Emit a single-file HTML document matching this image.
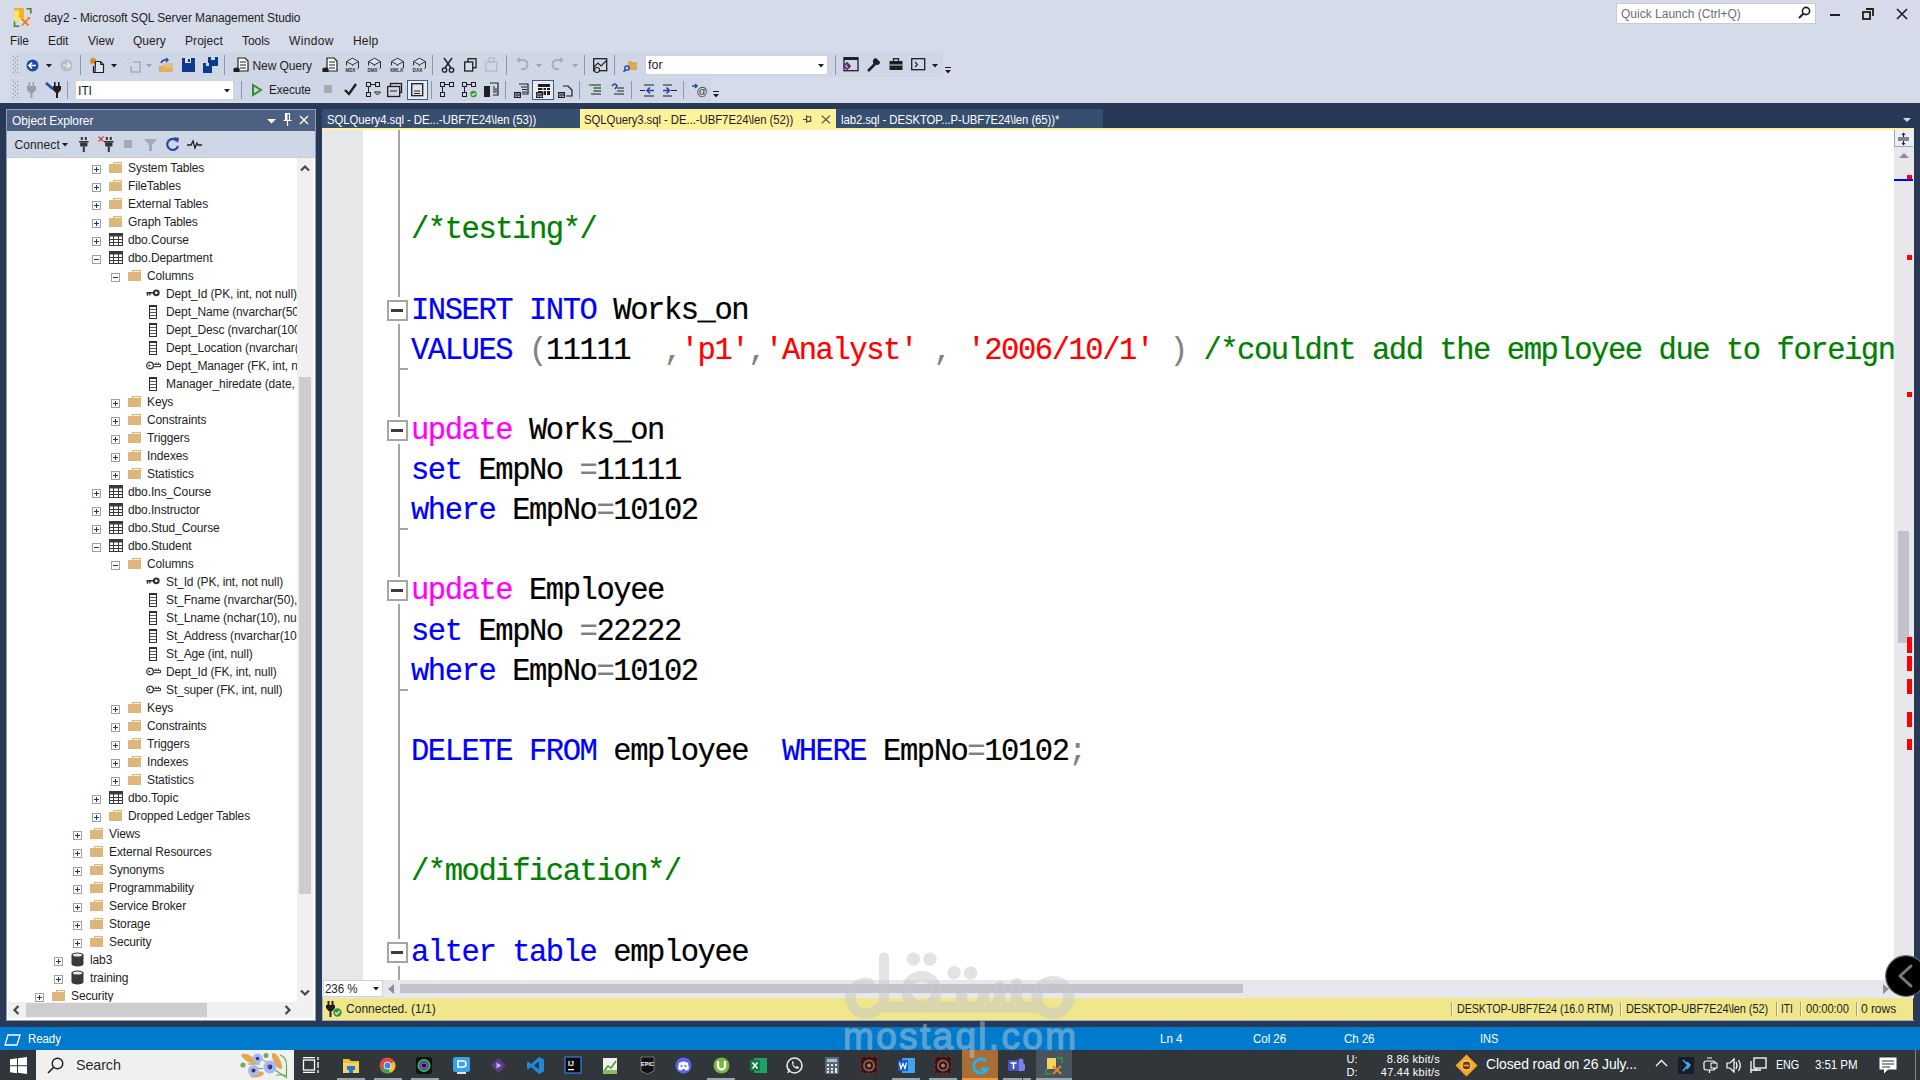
<!DOCTYPE html><html><head><meta charset="utf-8"><style>
*{margin:0;padding:0;box-sizing:border-box}
html,body{width:1920px;height:1080px;overflow:hidden;background:#d6dbe9;font-family:"Liberation Sans",sans-serif;font-size:12px;color:#1e1e1e}
.a{position:absolute}
.t{position:absolute;white-space:nowrap;line-height:14px}
svg{position:absolute;overflow:visible}
.ui{font-size:12px;letter-spacing:-0.2px}
.code{position:absolute;left:411px;height:40px;font-family:"Liberation Mono",monospace;font-size:30.5px;letter-spacing:-1.445px;white-space:pre;line-height:40px;color:#000;-webkit-text-stroke:0.2px currentColor}
.kw{color:#0000ff}.cm{color:#008000}.st{color:#ff0000}.gr{color:#808080}.mg{color:#ff00ff}
.row{position:absolute;height:18px;line-height:18px;white-space:nowrap;font-size:12px;letter-spacing:-0.12px;color:#1e1e1e}
.sep{position:absolute;width:1px;background:#99a3be}
</style></head><body>
<svg style="left:13px;top:7px;" width="20" height="20" viewBox="0 0 20 20"><rect x="1" y="1" width="10" height="12.5" fill="#f8e466"/><rect x="6" y="3" width="5" height="8" fill="#f3b41c"/><rect x="1" y="1" width="10" height="2.5" fill="#eab040"/><path d="M13.5 1.7h4.3v4.8M1.5 14.5v4.8h4.8" fill="none" stroke="#3c8c1c" stroke-width="1.6"/><path d="M8.5 11.5l7 7M16.5 10.5l-7.5 8" stroke="#f47a10" stroke-width="1.8"/><path d="M14.5 10l3 0.5-1 2z" fill="#f47a10"/></svg>
<div class="t" style="left:44px;top:11px;font-size:12.5px;color:#1e1e1e;letter-spacing:-0.083px;transform:scaleX(0.9536);transform-origin:0 0">day2 - Microsoft SQL Server Management Studio</div>
<div class="a" style="left:1616px;top:3px;width:200px;height:21px;background:#fff;border:1px solid #c4cbdc"></div>
<div class="t" style="left:1621px;top:7px;color:#6d6d6d;letter-spacing:0.004px">Quick Launch (Ctrl+Q)</div>
<svg style="left:1797px;top:6px;" width="14" height="14" viewBox="0 0 14 14"><circle cx="9" cy="5" r="3.6" fill="none" stroke="#1e1e1e" stroke-width="1.6"/><path d="M6.5 7.5L2 12" stroke="#1e1e1e" stroke-width="2"/></svg>
<div class="a" style="left:1830px;top:14px;width:10px;height:2px;background:#1e1e1e;"></div>
<svg style="left:1862px;top:8px;" width="13" height="13" viewBox="0 0 13 13"><rect x="1" y="4" width="7" height="7" fill="none" stroke="#1e1e1e" stroke-width="1.8"/><path d="M4 1h7v7" fill="none" stroke="#1e1e1e" stroke-width="1.8"/></svg>
<svg style="left:1896px;top:8px;" width="13" height="13" viewBox="0 0 13 13"><path d="M1 1l10 10M11 1L1 11" stroke="#1e1e1e" stroke-width="1.6"/></svg>
<div class="t" style="left:10px;top:34px;;letter-spacing:-0.080px;transform:scaleX(0.9886);transform-origin:0 0">File</div>
<div class="t" style="left:48px;top:34px;;letter-spacing:-0.080px;transform:scaleX(0.9972);transform-origin:0 0">Edit</div>
<div class="t" style="left:88px;top:34px;;letter-spacing:0.002px">View</div>
<div class="t" style="left:133px;top:34px;;letter-spacing:0.024px">Query</div>
<div class="t" style="left:185px;top:34px;;letter-spacing:0.065px">Project</div>
<div class="t" style="left:242px;top:34px;;letter-spacing:-0.080px;transform:scaleX(1.0067);transform-origin:0 0">Tools</div>
<div class="t" style="left:289px;top:34px;;letter-spacing:0.353px">Window</div>
<div class="t" style="left:353px;top:34px;;letter-spacing:0.155px">Help</div>
<div class="a" style="left:10px;top:52px;width:933px;height:25px;background:#cfd6e5;"></div>
<div class="a" style="left:943px;top:52px;width:10px;height:25px;background:#d6dbe9;"></div>
<div class="a" style="left:10px;top:78px;width:701px;height:23px;background:#cfd6e5;"></div>
<svg style="left:13px;top:56px;shape-rendering:crispEdges" width="5" height="17" viewBox="0 0 5 17"><rect x="0" y="0" width="1" height="1" fill="#7a85a0"/><rect x="4" y="0" width="1" height="1" fill="#7a85a0"/><rect x="2" y="2" width="1" height="1" fill="#7a85a0"/><rect x="0" y="4" width="1" height="1" fill="#7a85a0"/><rect x="4" y="4" width="1" height="1" fill="#7a85a0"/><rect x="2" y="6" width="1" height="1" fill="#7a85a0"/><rect x="0" y="8" width="1" height="1" fill="#7a85a0"/><rect x="4" y="8" width="1" height="1" fill="#7a85a0"/><rect x="2" y="10" width="1" height="1" fill="#7a85a0"/><rect x="0" y="12" width="1" height="1" fill="#7a85a0"/><rect x="4" y="12" width="1" height="1" fill="#7a85a0"/><rect x="2" y="14" width="1" height="1" fill="#7a85a0"/><rect x="0" y="16" width="1" height="1" fill="#7a85a0"/><rect x="4" y="16" width="1" height="1" fill="#7a85a0"/></svg>
<svg style="left:13px;top:81px;shape-rendering:crispEdges" width="5" height="17" viewBox="0 0 5 17"><rect x="0" y="0" width="1" height="1" fill="#7a85a0"/><rect x="4" y="0" width="1" height="1" fill="#7a85a0"/><rect x="2" y="2" width="1" height="1" fill="#7a85a0"/><rect x="0" y="4" width="1" height="1" fill="#7a85a0"/><rect x="4" y="4" width="1" height="1" fill="#7a85a0"/><rect x="2" y="6" width="1" height="1" fill="#7a85a0"/><rect x="0" y="8" width="1" height="1" fill="#7a85a0"/><rect x="4" y="8" width="1" height="1" fill="#7a85a0"/><rect x="2" y="10" width="1" height="1" fill="#7a85a0"/><rect x="0" y="12" width="1" height="1" fill="#7a85a0"/><rect x="4" y="12" width="1" height="1" fill="#7a85a0"/><rect x="2" y="14" width="1" height="1" fill="#7a85a0"/><rect x="0" y="16" width="1" height="1" fill="#7a85a0"/><rect x="4" y="16" width="1" height="1" fill="#7a85a0"/></svg>
<svg style="left:26px;top:59px;" width="13" height="13" viewBox="0 0 13 13"><circle cx="6.5" cy="6.5" r="6" fill="#1c4aa5"/><path d="M3 6.5h7M6 3.5L3 6.5l3 3" fill="none" stroke="#fff" stroke-width="1.7"/></svg>
<svg style="left:46px;top:64px;" width="6" height="4" viewBox="0 0 6 4"><path d="M0 0h6l-3.0 3.5z" fill="#1e1e1e"/></svg>
<svg style="left:60px;top:59px;" width="13" height="13" viewBox="0 0 13 13"><circle cx="6.5" cy="6.5" r="6" fill="#b9bdc6"/><path d="M3 6.5h7M7 3.5l3 3-3 3" fill="none" stroke="#e8e8e8" stroke-width="1.7"/></svg>
<div class="a" style="left:80px;top:55px;width:1px;height:20px;background:#8d97b3;"></div>
<svg style="left:89px;top:57px;" width="16" height="16" viewBox="0 0 16 16"><path d="M4 0.5v7M0.5 4h7M1.5 1.5l5 5M6.5 1.5l-5 5" stroke="#e07f12" stroke-width="1.1"/><circle cx="4" cy="4" r="1.6" fill="#e07f12"/><path d="M6.5 4.5h5l3 3v8h-8.5z" fill="#dde2ee" stroke="#1e1e1e" stroke-width="1.2"/><path d="M11.5 4.5v3h3" fill="none" stroke="#1e1e1e" stroke-width="1"/><path d="M4.5 9v6.5h2" fill="none" stroke="#1e1e1e" stroke-width="1.2"/></svg>
<svg style="left:111px;top:64px;" width="6" height="4" viewBox="0 0 6 4"><path d="M0 0h6l-3.0 3.5z" fill="#1e1e1e"/></svg>
<svg style="left:125px;top:57px;" width="16" height="16" viewBox="0 0 16 16"><path d="M8 5h7v10H6V9" fill="none" stroke="#a8adb8" stroke-width="1.6"/><circle cx="4" cy="4" r="2" fill="none" stroke="#c8ccd4"/></svg>
<svg style="left:146px;top:64px;" width="6" height="4" viewBox="0 0 6 4"><path d="M0 0h6l-3.0 3.5z" fill="#a0a4ae"/></svg>
<svg style="left:158px;top:58px;" width="16" height="15" viewBox="0 0 16 15"><path d="M1 8h5l2 2h7v4H1z" fill="#dca957"/><path d="M3 9l4-4h8v9H3z" fill="#e8b565" opacity="0.7"/><path d="M3 5q2-4 6-3" fill="none" stroke="#1c4aa5" stroke-width="1.6"/><path d="M8 0l2 2-2 2" fill="none" stroke="#1c4aa5" stroke-width="1.4"/></svg>
<svg style="left:182px;top:58px;" width="13" height="14" viewBox="0 0 13 14"><path d="M0 0h13v14H0z" fill="#0e3a8e"/><rect x="3" y="0" width="6" height="5" fill="#d6dbe9"/><rect x="6" y="1" width="2" height="3" fill="#0e3a8e"/><rect x="2" y="9" width="9" height="4" fill="#0e3a8e"/></svg>
<svg style="left:203px;top:57px;" width="15" height="16" viewBox="0 0 15 16"><path d="M5 0h10v9H5z" fill="#0e3a8e"/><rect x="8" y="0" width="4" height="3" fill="#cfd6e5"/><path d="M0 6h9v10H0z" fill="#0e3a8e"/><rect x="3" y="6" width="3" height="3" fill="#cfd6e5"/></svg>
<div class="a" style="left:224px;top:55px;width:1px;height:20px;background:#8d97b3;"></div>
<svg style="left:233px;top:57px;" width="16" height="16" viewBox="0 0 16 16"><path d="M5 1h7l3 3v10H5z" fill="#fff" stroke="#1e1e1e" stroke-width="1.2"/><path d="M7 5h6M7 8h6M7 11h6" stroke="#1e1e1e" stroke-width="1"/><ellipse cx="3.5" cy="12" rx="3" ry="1.5" fill="#1e1e1e"/><rect x="0.5" y="12" width="6" height="3" fill="#1e1e1e"/></svg>
<div class="t" style="left:252.5px;top:59px;;letter-spacing:-0.080px;transform:scaleX(1.0000);transform-origin:0 0">New Query</div>
<svg style="left:322px;top:57px;" width="16" height="16" viewBox="0 0 16 16"><path d="M5 1h7l3 3v10H5z" fill="#fff" stroke="#1e1e1e" stroke-width="1.2"/><path d="M7 5h6M7 8h6M7 11h6" stroke="#1e1e1e" stroke-width="1"/><ellipse cx="3.5" cy="12" rx="3" ry="1.5" fill="#1e1e1e"/><rect x="0.5" y="12" width="6" height="3" fill="#1e1e1e"/></svg>
<svg style="left:344px;top:57px;" width="16" height="16" viewBox="0 0 16 16"><path d="M2.5 4.5L8.5 1.2l6 3.3-6 3.3z" fill="#dde1ec" stroke="#303030" stroke-width="1"/><path d="M2.5 4.5v4M14.5 4.5v6.5l-1.2 0.8M8.5 7.8v1.2" fill="none" stroke="#303030" stroke-width="1"/><text x="6.5" y="15.3" font-size="6.2" font-family="Liberation Sans" font-weight="bold" text-anchor="middle" textLength="10" lengthAdjust="spacingAndGlyphs" fill="#303030">MDX</text></svg>
<svg style="left:366px;top:57px;" width="16" height="16" viewBox="0 0 16 16"><path d="M2.5 4.5L8.5 1.2l6 3.3-6 3.3z" fill="#dde1ec" stroke="#303030" stroke-width="1"/><path d="M2.5 4.5v4M14.5 4.5v6.5l-1.2 0.8M8.5 7.8v1.2" fill="none" stroke="#303030" stroke-width="1"/><text x="6.5" y="15.3" font-size="6.2" font-family="Liberation Sans" font-weight="bold" text-anchor="middle" textLength="10" lengthAdjust="spacingAndGlyphs" fill="#303030">DMX</text></svg>
<svg style="left:389px;top:57px;" width="16" height="16" viewBox="0 0 16 16"><path d="M2.5 4.5L8.5 1.2l6 3.3-6 3.3z" fill="#dde1ec" stroke="#303030" stroke-width="1"/><path d="M2.5 4.5v4M14.5 4.5v6.5l-1.2 0.8M8.5 7.8v1.2" fill="none" stroke="#303030" stroke-width="1"/><text x="7.5" y="15.3" font-size="6.2" font-family="Liberation Sans" font-weight="bold" text-anchor="middle" textLength="13" lengthAdjust="spacingAndGlyphs" fill="#303030">XMLA</text></svg>
<svg style="left:411px;top:57px;" width="16" height="16" viewBox="0 0 16 16"><path d="M2.5 4.5L8.5 1.2l6 3.3-6 3.3z" fill="#dde1ec" stroke="#303030" stroke-width="1"/><path d="M2.5 4.5v4M14.5 4.5v6.5l-1.2 0.8M8.5 7.8v1.2" fill="none" stroke="#303030" stroke-width="1"/><text x="6.5" y="15.3" font-size="6.2" font-family="Liberation Sans" font-weight="bold" text-anchor="middle" textLength="10" lengthAdjust="spacingAndGlyphs" fill="#303030">DAX</text></svg>
<div class="a" style="left:432px;top:55px;width:1px;height:20px;background:#8d97b3;"></div>
<svg style="left:441px;top:57px;" width="14" height="16" viewBox="0 0 14 16"><path d="M3 1l7 10M11 1L4 11" stroke="#1e1e1e" stroke-width="1.4"/><circle cx="3.5" cy="13" r="2.2" fill="none" stroke="#1e1e1e" stroke-width="1.3"/><circle cx="10.5" cy="13" r="2.2" fill="none" stroke="#1e1e1e" stroke-width="1.3"/></svg>
<svg style="left:464px;top:58px;" width="13" height="14" viewBox="0 0 13 14"><rect x="4" y="0.7" width="8" height="9" fill="none" stroke="#1e1e1e" stroke-width="1.3"/><rect x="0.7" y="4" width="8" height="9" fill="#d6dbe9" stroke="#1e1e1e" stroke-width="1.3"/></svg>
<svg style="left:485px;top:57px;" width="13" height="15" viewBox="0 0 13 15"><rect x="0.7" y="5" width="11" height="9" fill="none" stroke="#b4b9c4" stroke-width="1.3"/><rect x="4" y="1" width="5" height="4" fill="none" stroke="#b4b9c4" stroke-width="1.3"/></svg>
<div class="a" style="left:506px;top:55px;width:1px;height:20px;background:#8d97b3;"></div>
<svg style="left:515px;top:57px;" width="14" height="16" viewBox="0 0 14 16"><path d="M4 3h4a4.5 4.5 0 0 1 0 9H6" fill="none" stroke="#a8acb6" stroke-width="2"/><path d="M1 3l4-3v6z" fill="#a8acb6"/></svg>
<svg style="left:536px;top:64px;" width="6" height="4" viewBox="0 0 6 4"><path d="M0 0h6l-3.0 3.5z" fill="#a0a4ae"/></svg>
<svg style="left:551px;top:57px;" width="14" height="16" viewBox="0 0 14 16"><path d="M10 3H6a4.5 4.5 0 0 0 0 9h2" fill="none" stroke="#a8acb6" stroke-width="2"/><path d="M13 3l-4-3v6z" fill="#a8acb6"/></svg>
<svg style="left:572px;top:64px;" width="6" height="4" viewBox="0 0 6 4"><path d="M0 0h6l-3.0 3.5z" fill="#a0a4ae"/></svg>
<div class="a" style="left:584px;top:55px;width:1px;height:20px;background:#8d97b3;"></div>
<svg style="left:593px;top:58px;" width="15" height="15" viewBox="0 0 15 15"><rect x="0.7" y="0.7" width="13" height="12" fill="none" stroke="#1e1e1e" stroke-width="1.3"/><path d="M1 9l4-4 3 3 6-6" fill="none" stroke="#1e1e1e" stroke-width="1.1"/><circle cx="4" cy="12" r="2.5" fill="#cfd6e5" stroke="#1e1e1e" stroke-width="1.1"/></svg>
<div class="a" style="left:614px;top:55px;width:1px;height:20px;background:#8d97b3;"></div>
<svg style="left:623px;top:58px;" width="15" height="15" viewBox="0 0 15 15"><path d="M5 3h3l1 1h5v8H5z" fill="#dca957"/><circle cx="4" cy="10" r="2.2" fill="none" stroke="#1c4aa5" stroke-width="1.3"/><path d="M2.5 11.5L0.5 14" stroke="#1c4aa5" stroke-width="1.5"/></svg>
<div class="a" style="left:645px;top:55px;width:183px;height:20px;background:#fff;border:1px solid #cdd3e2"></div>
<div class="t" style="left:648px;top:58px;font-size:12.5px">for</div>
<svg style="left:818px;top:64px;" width="6" height="4" viewBox="0 0 6 4"><path d="M0 0h6l-3.0 3.5z" fill="#1e1e1e"/></svg>
<div class="a" style="left:835px;top:55px;width:1px;height:20px;background:#8d97b3;"></div>
<svg style="left:843px;top:57px;" width="16" height="16" viewBox="0 0 16 16"><rect x="1" y="0.7" width="14" height="13" fill="none" stroke="#1e1e1e" stroke-width="1.3"/><rect x="1" y="0.7" width="14" height="2.3" fill="#1e1e1e"/><path d="M1 9l3 3 3-3-3-3zM4 8l3 3" fill="none" stroke="#68217a" stroke-width="1.6"/></svg>
<svg style="left:866px;top:57px;" width="15" height="16" viewBox="0 0 15 16"><path d="M2 14l7-7" stroke="#1e1e1e" stroke-width="2.6"/><circle cx="10.5" cy="4.5" r="3.6" fill="#1e1e1e"/><path d="M10 1l3-1 2 2-1 3z" fill="#cfd6e5"/></svg>
<svg style="left:889px;top:58px;" width="14" height="13" viewBox="0 0 14 13"><rect x="0.5" y="3" width="13" height="9" fill="#1e1e1e"/><rect x="4.5" y="0.7" width="5" height="3" fill="none" stroke="#1e1e1e" stroke-width="1.3"/><rect x="0.5" y="6.5" width="13" height="1" fill="#cfd6e5"/></svg>
<svg style="left:911px;top:58px;" width="15" height="13" viewBox="0 0 15 13"><rect x="0.7" y="0.7" width="13" height="11" fill="none" stroke="#1e1e1e" stroke-width="1.3"/><path d="M4 4l2.5 2.5L4 9" fill="none" stroke="#1e1e1e" stroke-width="1.1"/></svg>
<svg style="left:932px;top:64px;" width="6" height="4" viewBox="0 0 6 4"><path d="M0 0h6l-3.0 3.5z" fill="#1e1e1e"/></svg>
<svg style="left:945px;top:67px;" width="7" height="8" viewBox="0 0 7 8"><rect x="0" y="0" width="6" height="1" fill="#1e1e1e"/><path d="M0 3h6l-3 3.5z" fill="#1e1e1e"/></svg>
<svg style="left:27px;top:82px;" width="9" height="16" viewBox="0 0 9 16"><rect x="1.5" y="0" width="1.6" height="4" fill="#9a9ea8"/><rect x="5.5" y="0" width="1.6" height="4" fill="#9a9ea8"/><path d="M0 4h9v4l-3 3H3L0 8z" fill="#9a9ea8"/><rect x="3.5" y="10" width="2" height="6" fill="#9a9ea8"/></svg>
<svg style="left:45px;top:82px;" width="16" height="16" viewBox="0 0 16 16"><rect x="9" y="0" width="1.6" height="4" fill="#1e1e1e"/><rect x="13" y="0" width="1.6" height="4" fill="#1e1e1e"/><path d="M8 4h8v4l-3 3h-2l-3-3z" fill="#1e1e1e"/><rect x="11" y="10" width="2" height="6" fill="#1e1e1e"/><path d="M1 1l7 6" stroke="#1c4aa5" stroke-width="2.5"/></svg>
<div class="a" style="left:67px;top:81px;width:1px;height:18px;background:#8d97b3;"></div>
<div class="a" style="left:75px;top:80px;width:159px;height:20px;background:#fff;border:1px solid #cdd3e2"></div>
<div class="t" style="left:78px;top:84px;font-size:12.5px;letter-spacing:-0.3px">ITI</div>
<svg style="left:224px;top:89px;" width="6" height="4" viewBox="0 0 6 4"><path d="M0 0h6l-3.0 3.5z" fill="#1e1e1e"/></svg>
<div class="a" style="left:241px;top:81px;width:1px;height:18px;background:#8d97b3;"></div>
<svg style="left:252px;top:84px;" width="10" height="12" viewBox="0 0 10 12"><path d="M1 1l8 5-8 5z" fill="none" stroke="#388a34" stroke-width="2"/></svg>
<div class="t" style="left:269px;top:83px;;letter-spacing:-0.080px;transform:scaleX(0.9766);transform-origin:0 0">Execute</div>
<div class="a" style="left:324px;top:85px;width:8px;height:8px;background:#a5a9b3;"></div>
<svg style="left:344px;top:83px;" width="13" height="13" viewBox="0 0 13 13"><path d="M1 7l4 4 7-10" fill="none" stroke="#1e1e1e" stroke-width="2.4"/></svg>
<svg style="left:366px;top:82px;" width="15" height="15" viewBox="0 0 15 15"><rect x="0.5" y="0.5" width="4" height="4" fill="none" stroke="#1e1e1e"/><rect x="9.5" y="0.5" width="4" height="4" fill="none" stroke="#1e1e1e"/><rect x="0.5" y="10.5" width="4" height="4" fill="none" stroke="#1e1e1e"/><path d="M5 2.5h4M2.5 5v5" stroke="#1e1e1e"/><path d="M8.5 10h6l-3 3z" fill="none" stroke="#1e1e1e"/></svg>
<svg style="left:387px;top:82px;" width="16" height="16" viewBox="0 0 16 16"><rect x="3.5" y="1.5" width="11" height="9" fill="none" stroke="#1e1e1e" stroke-width="1.3"/><rect x="0.7" y="4.5" width="12" height="10" fill="#cfd6e5" stroke="#1e1e1e" stroke-width="1.3"/><path d="M3 9h7" stroke="#1e1e1e"/></svg>
<div class="a" style="left:407px;top:80px;width:21px;height:20px;background:#e9ecf5;border:1px solid #3d5a8f"></div>
<svg style="left:411px;top:83px;" width="13" height="14" viewBox="0 0 13 14"><rect x="0.7" y="0.7" width="11" height="12" fill="#e0e3ea" stroke="#1e1e1e" stroke-width="1.3"/><path d="M3 8h6M3 10.5h6" stroke="#1e1e1e"/></svg>
<div class="a" style="left:431px;top:81px;width:1px;height:18px;background:#8d97b3;"></div>
<svg style="left:440px;top:82px;" width="15" height="15" viewBox="0 0 15 15"><rect x="0.5" y="0.5" width="4" height="4" fill="none" stroke="#1e1e1e"/><rect x="9.5" y="0.5" width="4" height="4" fill="none" stroke="#1e1e1e"/><rect x="0.5" y="10.5" width="4" height="4" fill="none" stroke="#1e1e1e"/><path d="M5 2.5h4M2.5 5v5" stroke="#1e1e1e"/></svg>
<svg style="left:462px;top:82px;" width="15" height="15" viewBox="0 0 15 15"><rect x="0.5" y="0.5" width="4" height="4" fill="none" stroke="#1e1e1e"/><rect x="9.5" y="0.5" width="4" height="4" fill="none" stroke="#1e1e1e"/><rect x="0.5" y="10.5" width="4" height="4" fill="none" stroke="#1e1e1e"/><path d="M5 2.5h4M2.5 5v5" stroke="#1e1e1e"/><circle cx="11.5" cy="12" r="3.2" fill="#339933"/><path d="M9.8 12l1.3 1.3 2.2-2.5" fill="none" stroke="#fff" stroke-width="1.1"/></svg>
<svg style="left:484px;top:82px;" width="15" height="15" viewBox="0 0 15 15"><rect x="0" y="4" width="6" height="11" fill="#1e1e1e"/><path d="M6 1h8v12H9" fill="none" stroke="#1e1e1e" stroke-width="1.2"/><path d="M10 4v7M12 6v5" stroke="#1e1e1e"/></svg>
<div class="a" style="left:505px;top:81px;width:1px;height:18px;background:#8d97b3;"></div>
<svg style="left:514px;top:83px;" width="15" height="15" viewBox="0 0 15 15"><path d="M5 1h9v10H8" fill="none" stroke="#1e1e1e" stroke-width="1.2"/><path d="M7 4h6M8 6.5h5M8 9h5" stroke="#1e1e1e"/><rect x="0" y="9" width="7" height="6" fill="#1e1e1e"/><text x="3.5" y="14" font-size="5" font-family="Liberation Sans" text-anchor="middle" fill="#fff">01</text></svg>
<div class="a" style="left:532px;top:80px;width:22px;height:20px;background:#e9ecf5;border:1px solid #3d5a8f"></div>
<svg style="left:536px;top:83px;" width="15" height="15" viewBox="0 0 15 15"><rect x="2" y="1" width="12" height="11" fill="#1e1e1e"/><path d="M2 4.5h12M2 7.5h12M7 4v8M10.5 4v8" stroke="#fff" stroke-width="1"/><rect x="0" y="9" width="7" height="6" fill="#1e1e1e"/><text x="3.5" y="14" font-size="5" font-family="Liberation Sans" text-anchor="middle" fill="#fff">01</text></svg>
<svg style="left:558px;top:83px;" width="15" height="15" viewBox="0 0 15 15"><path d="M5 3h5l4 4v6H8" fill="none" stroke="#1e1e1e" stroke-width="1.2"/><rect x="0" y="9" width="7" height="6" fill="#1e1e1e"/><text x="3.5" y="14" font-size="5" font-family="Liberation Sans" text-anchor="middle" fill="#fff">01</text></svg>
<div class="a" style="left:579px;top:81px;width:1px;height:18px;background:#8d97b3;"></div>
<svg style="left:589px;top:84px;" width="12" height="11" viewBox="0 0 12 11"><path d="M0 1h3" stroke="#339933" stroke-width="1.5"/><path d="M3 1h9M5 4h7M5 7h7M2 10h10" stroke="#1e1e1e" stroke-width="1.2"/><path d="M4 4h8M4 7h8" stroke="#339933" stroke-width="1.2"/></svg>
<svg style="left:611px;top:83px;" width="13" height="12" viewBox="0 0 13 12"><path d="M1 3q3-4 5 0l-2 3" fill="none" stroke="#1c4aa5" stroke-width="1.5"/><path d="M6 5h7M6 8h7M3 11h10" stroke="#1e1e1e" stroke-width="1.2"/></svg>
<div class="a" style="left:631px;top:81px;width:1px;height:18px;background:#8d97b3;"></div>
<svg style="left:640px;top:84px;" width="15" height="13" viewBox="0 0 15 13"><path d="M4 1h10M4 12h10M0 6.5h5" stroke="#1e1e1e" stroke-width="1.2"/><path d="M14 6.5H8M10 3.5L7 6.5l3 3" fill="none" stroke="#1c4aa5" stroke-width="1.6"/></svg>
<svg style="left:662px;top:84px;" width="15" height="13" viewBox="0 0 15 13"><path d="M1 1h9M1 12h9M9 6.5h6" stroke="#1e1e1e" stroke-width="1.2"/><path d="M1 6.5h6M4.5 3.5l3 3-3 3" fill="none" stroke="#1c4aa5" stroke-width="1.6"/></svg>
<div class="a" style="left:683px;top:81px;width:1px;height:18px;background:#8d97b3;"></div>
<svg style="left:692px;top:83px;" width="15" height="13" viewBox="0 0 15 13"><path d="M0 3h5M3 1l2 2-2 2" fill="none" stroke="#1c4aa5" stroke-width="1.5"/><text x="10" y="12" font-size="11" font-family="Liberation Sans" text-anchor="middle" fill="#3a3a3a">@</text></svg>
<svg style="left:713px;top:91px;" width="7" height="8" viewBox="0 0 7 8"><rect x="0" y="0" width="6" height="1" fill="#1e1e1e"/><path d="M0 3h6l-3 3.5z" fill="#1e1e1e"/></svg>
<div class="a" style="left:0px;top:103px;width:1920px;height:924px;background:#293955;"></div>
<div class="a" style="left:6px;top:109px;width:310px;height:912px;background:#cfd6e5;border:1px solid #8e9dc0"></div>
<div class="a" style="left:7px;top:110px;width:308px;height:21px;background:#4d6082;"></div>
<div class="t" style="left:11.5px;top:114px;color:#fff;font-size:12.5px;letter-spacing:-0.083px;transform:scaleX(0.9577);transform-origin:0 0">Object Explorer</div>
<svg style="left:267px;top:119px;" width="9" height="5" viewBox="0 0 9 5"><path d="M0 0h9l-4.5 4.5z" fill="#fff"/></svg>
<svg style="left:283px;top:113px;" width="9" height="13" viewBox="0 0 9 13"><path d="M2 0.6h5M2.5 1v6M6.5 1v6M0.5 7.5h8M4.5 8v5" fill="none" stroke="#fff" stroke-width="1.2"/><rect x="2.5" y="1" width="2" height="6" fill="#fff"/></svg>
<svg style="left:299px;top:115px;" width="10" height="10" viewBox="0 0 10 10"><path d="M1 1l8 8M9 1L1 9" stroke="#fff" stroke-width="1.4"/></svg>
<div class="t" style="left:14.5px;top:138px;;letter-spacing:0.086px">Connect</div>
<svg style="left:62px;top:143px;" width="6" height="4" viewBox="0 0 6 4"><path d="M0 0h6l-3 3.5z" fill="#1e1e1e"/></svg>
<svg style="left:79px;top:137px;" width="10" height="15" viewBox="0 0 10 15"><rect x="1.8" y="0" width="2" height="3" fill="#333333"/><rect x="5.8" y="0" width="2" height="3" fill="#333333"/><rect x="0" y="4" width="9.6" height="1.5" fill="#333333"/><rect x="1.2" y="5.5" width="7.2" height="4" fill="#333333"/><rect x="3.8" y="9.5" width="2" height="5.5" fill="#333333"/></svg>
<svg style="left:104px;top:137px;" width="10" height="15" viewBox="0 0 10 15"><rect x="1.8" y="0" width="2" height="3" fill="#333333"/><rect x="5.8" y="0" width="2" height="3" fill="#333333"/><rect x="0" y="4" width="9.6" height="1.5" fill="#333333"/><rect x="1.2" y="5.5" width="7.2" height="4" fill="#333333"/><rect x="3.8" y="9.5" width="2" height="5.5" fill="#333333"/></svg>
<svg style="left:98px;top:136px;" width="6" height="6" viewBox="0 0 6 6"><path d="M0.5 0.5l5 5M5.5 0.5l-5 5" stroke="#c8481c" stroke-width="1.1"/></svg>
<div class="a" style="left:124px;top:140px;width:8px;height:8px;background:#a5a9b3;"></div>
<svg style="left:144px;top:139px;" width="13" height="12" viewBox="0 0 13 12"><path d="M0 0h13l-5 6v6h-3V6z" fill="#a5a9b3"/></svg>
<svg style="left:166px;top:137px;" width="13" height="14" viewBox="0 0 13 14"><path d="M11 4A5.5 5.5 0 1 0 12 9" fill="none" stroke="#1c4aa5" stroke-width="2.2"/><path d="M8 0l5 1-1 5z" fill="#1c4aa5"/></svg>
<svg style="left:187px;top:140px;" width="15" height="8" viewBox="0 0 15 8"><path d="M0 5h4l2-4 2 7 2-5 1 2h4" fill="none" stroke="#1e1e1e" stroke-width="1.3"/></svg>
<div class="a" style="left:7px;top:157px;width:308px;height:863px;background:#ffffff;"></div>
<div class="a" style="left:7px;top:157px;width:308px;height:1px;background:#c9cfdc;"></div>
<div class="a" style="left:297px;top:158px;width:16px;height:844px;background:#f0f0f0;"></div>
<div class="a" style="left:299px;top:377px;width:12px;height:517px;background:#cdcdcd;"></div>
<svg style="left:300px;top:165px;" width="10" height="7" viewBox="0 0 10 7"><path d="M1 5.5l4-4 4 4" fill="none" stroke="#464646" stroke-width="2.2"/></svg>
<svg style="left:300px;top:989px;" width="10" height="7" viewBox="0 0 10 7"><path d="M1 1.5l4 4 4-4" fill="none" stroke="#464646" stroke-width="2.2"/></svg>
<div class="a" style="left:8px;top:1002px;width:305px;height:16px;background:#f0f0f0;"></div>
<div class="a" style="left:26px;top:1003px;width:181px;height:14px;background:#cdcdcd;"></div>
<svg style="left:13px;top:1005px;" width="7" height="10" viewBox="0 0 7 10"><path d="M5.5 1l-4 4 4 4" fill="none" stroke="#464646" stroke-width="2.2"/></svg>
<svg style="left:284px;top:1005px;" width="7" height="10" viewBox="0 0 7 10"><path d="M1.5 1l4 4-4 4" fill="none" stroke="#464646" stroke-width="2.2"/></svg>
<div class="a" style="left:297px;top:1002px;width:16px;height:16px;background:#f0f0f0;"></div>
<div class="a" style="left:0;top:158px;width:297px;height:844px;overflow:hidden"><div class="a" style="left:0;top:-158px;width:1920px;height:1080px"><svg style="left:92px;top:165px" width="9" height="9" viewBox="0 0 9 9"><rect x="0.5" y="0.5" width="8" height="8" fill="#fff" stroke="#a0a0a0"/><path d="M2 4.5h5" stroke="#1e3287" stroke-width="1"/><path d="M4.5 2v5" stroke="#1e3287" stroke-width="1"/></svg><svg style="left:109px;top:162px" width="13" height="11" viewBox="0 0 13 11" shape-rendering="crispEdges"><rect x="4" y="0" width="9" height="2" fill="#dcb67a"/><rect x="5" y="1" width="7" height="1" fill="#fbf3e2"/><rect x="0" y="2" width="13" height="9" fill="#dcb67a"/></svg><div class="row" style="left:128px;top:159px">System Tables</div><svg style="left:92px;top:183px" width="9" height="9" viewBox="0 0 9 9"><rect x="0.5" y="0.5" width="8" height="8" fill="#fff" stroke="#a0a0a0"/><path d="M2 4.5h5" stroke="#1e3287" stroke-width="1"/><path d="M4.5 2v5" stroke="#1e3287" stroke-width="1"/></svg><svg style="left:109px;top:180px" width="13" height="11" viewBox="0 0 13 11" shape-rendering="crispEdges"><rect x="4" y="0" width="9" height="2" fill="#dcb67a"/><rect x="5" y="1" width="7" height="1" fill="#fbf3e2"/><rect x="0" y="2" width="13" height="9" fill="#dcb67a"/></svg><div class="row" style="left:128px;top:177px">FileTables</div><svg style="left:92px;top:201px" width="9" height="9" viewBox="0 0 9 9"><rect x="0.5" y="0.5" width="8" height="8" fill="#fff" stroke="#a0a0a0"/><path d="M2 4.5h5" stroke="#1e3287" stroke-width="1"/><path d="M4.5 2v5" stroke="#1e3287" stroke-width="1"/></svg><svg style="left:109px;top:198px" width="13" height="11" viewBox="0 0 13 11" shape-rendering="crispEdges"><rect x="4" y="0" width="9" height="2" fill="#dcb67a"/><rect x="5" y="1" width="7" height="1" fill="#fbf3e2"/><rect x="0" y="2" width="13" height="9" fill="#dcb67a"/></svg><div class="row" style="left:128px;top:195px">External Tables</div><svg style="left:92px;top:219px" width="9" height="9" viewBox="0 0 9 9"><rect x="0.5" y="0.5" width="8" height="8" fill="#fff" stroke="#a0a0a0"/><path d="M2 4.5h5" stroke="#1e3287" stroke-width="1"/><path d="M4.5 2v5" stroke="#1e3287" stroke-width="1"/></svg><svg style="left:109px;top:216px" width="13" height="11" viewBox="0 0 13 11" shape-rendering="crispEdges"><rect x="4" y="0" width="9" height="2" fill="#dcb67a"/><rect x="5" y="1" width="7" height="1" fill="#fbf3e2"/><rect x="0" y="2" width="13" height="9" fill="#dcb67a"/></svg><div class="row" style="left:128px;top:213px">Graph Tables</div><svg style="left:92px;top:237px" width="9" height="9" viewBox="0 0 9 9"><rect x="0.5" y="0.5" width="8" height="8" fill="#fff" stroke="#a0a0a0"/><path d="M2 4.5h5" stroke="#1e3287" stroke-width="1"/><path d="M4.5 2v5" stroke="#1e3287" stroke-width="1"/></svg><svg style="left:109px;top:233px" width="14" height="13" viewBox="0 0 14 13"><rect x="0.5" y="0.5" width="13" height="12" fill="#fff" stroke="#3a3a3a"/><rect x="0.5" y="0.5" width="13" height="3" fill="#3a3a3a"/><path d="M0 6.5h14M0 9.5h14M4.5 3v10M9.5 3v10" stroke="#3a3a3a"/></svg><div class="row" style="left:128px;top:231px">dbo.Course</div><svg style="left:92px;top:255px" width="9" height="9" viewBox="0 0 9 9"><rect x="0.5" y="0.5" width="8" height="8" fill="#fff" stroke="#a0a0a0"/><path d="M2 4.5h5" stroke="#1e3287" stroke-width="1"/></svg><svg style="left:109px;top:251px" width="14" height="13" viewBox="0 0 14 13"><rect x="0.5" y="0.5" width="13" height="12" fill="#fff" stroke="#3a3a3a"/><rect x="0.5" y="0.5" width="13" height="3" fill="#3a3a3a"/><path d="M0 6.5h14M0 9.5h14M4.5 3v10M9.5 3v10" stroke="#3a3a3a"/></svg><div class="row" style="left:128px;top:249px">dbo.Department</div><svg style="left:111px;top:273px" width="9" height="9" viewBox="0 0 9 9"><rect x="0.5" y="0.5" width="8" height="8" fill="#fff" stroke="#a0a0a0"/><path d="M2 4.5h5" stroke="#1e3287" stroke-width="1"/></svg><svg style="left:128px;top:270px" width="13" height="11" viewBox="0 0 13 11" shape-rendering="crispEdges"><rect x="4" y="0" width="9" height="2" fill="#dcb67a"/><rect x="5" y="1" width="7" height="1" fill="#fbf3e2"/><rect x="0" y="2" width="13" height="9" fill="#dcb67a"/></svg><div class="row" style="left:147px;top:267px">Columns</div><svg style="left:146px;top:289px" width="14" height="8" viewBox="0 0 14 8"><circle cx="10.3" cy="3.8" r="2.4" fill="none" stroke="#2e2e2e" stroke-width="2"/><path d="M0.5 3.8h7.5M1.5 3.8v3M3.8 3.8v2.5" stroke="#2e2e2e" stroke-width="1.5"/></svg><div class="row" style="left:166px;top:285px">Dept_Id (PK, int, not null)</div><svg style="left:149px;top:305px" width="8" height="14" viewBox="0 0 8 14" shape-rendering="crispEdges"><rect x="0.5" y="0.5" width="7" height="13" fill="#fff" stroke="#303030" stroke-width="1"/><rect x="0" y="0" width="8" height="2" fill="#303030"/><path d="M1 4.5h6M1 7.5h6M1 10.5h6" stroke="#555" stroke-width="1"/></svg><div class="row" style="left:166px;top:303px">Dept_Name (nvarchar(50), not null)</div><svg style="left:149px;top:323px" width="8" height="14" viewBox="0 0 8 14" shape-rendering="crispEdges"><rect x="0.5" y="0.5" width="7" height="13" fill="#fff" stroke="#303030" stroke-width="1"/><rect x="0" y="0" width="8" height="2" fill="#303030"/><path d="M1 4.5h6M1 7.5h6M1 10.5h6" stroke="#555" stroke-width="1"/></svg><div class="row" style="left:166px;top:321px">Dept_Desc (nvarchar(100), null)</div><svg style="left:149px;top:341px" width="8" height="14" viewBox="0 0 8 14" shape-rendering="crispEdges"><rect x="0.5" y="0.5" width="7" height="13" fill="#fff" stroke="#303030" stroke-width="1"/><rect x="0" y="0" width="8" height="2" fill="#303030"/><path d="M1 4.5h6M1 7.5h6M1 10.5h6" stroke="#555" stroke-width="1"/></svg><div class="row" style="left:166px;top:339px">Dept_Location (nvarchar(50), null)</div><svg style="left:146px;top:361px" width="15" height="9" viewBox="0 0 15 9"><circle cx="4" cy="4.5" r="3.3" fill="none" stroke="#2e2e2e" stroke-width="1.2"/><circle cx="3.3" cy="4.5" r="1" fill="#2e2e2e"/><path d="M7.3 3.3h7.2v2.4H7.3M10 1.5v1.8M12.5 1.5v1.8" fill="none" stroke="#2e2e2e" stroke-width="1"/></svg><div class="row" style="left:166px;top:357px">Dept_Manager (FK, int, null)</div><svg style="left:149px;top:377px" width="8" height="14" viewBox="0 0 8 14" shape-rendering="crispEdges"><rect x="0.5" y="0.5" width="7" height="13" fill="#fff" stroke="#303030" stroke-width="1"/><rect x="0" y="0" width="8" height="2" fill="#303030"/><path d="M1 4.5h6M1 7.5h6M1 10.5h6" stroke="#555" stroke-width="1"/></svg><div class="row" style="left:166px;top:375px">Manager_hiredate (date, null)</div><svg style="left:111px;top:399px" width="9" height="9" viewBox="0 0 9 9"><rect x="0.5" y="0.5" width="8" height="8" fill="#fff" stroke="#a0a0a0"/><path d="M2 4.5h5" stroke="#1e3287" stroke-width="1"/><path d="M4.5 2v5" stroke="#1e3287" stroke-width="1"/></svg><svg style="left:128px;top:396px" width="13" height="11" viewBox="0 0 13 11" shape-rendering="crispEdges"><rect x="4" y="0" width="9" height="2" fill="#dcb67a"/><rect x="5" y="1" width="7" height="1" fill="#fbf3e2"/><rect x="0" y="2" width="13" height="9" fill="#dcb67a"/></svg><div class="row" style="left:147px;top:393px">Keys</div><svg style="left:111px;top:417px" width="9" height="9" viewBox="0 0 9 9"><rect x="0.5" y="0.5" width="8" height="8" fill="#fff" stroke="#a0a0a0"/><path d="M2 4.5h5" stroke="#1e3287" stroke-width="1"/><path d="M4.5 2v5" stroke="#1e3287" stroke-width="1"/></svg><svg style="left:128px;top:414px" width="13" height="11" viewBox="0 0 13 11" shape-rendering="crispEdges"><rect x="4" y="0" width="9" height="2" fill="#dcb67a"/><rect x="5" y="1" width="7" height="1" fill="#fbf3e2"/><rect x="0" y="2" width="13" height="9" fill="#dcb67a"/></svg><div class="row" style="left:147px;top:411px">Constraints</div><svg style="left:111px;top:435px" width="9" height="9" viewBox="0 0 9 9"><rect x="0.5" y="0.5" width="8" height="8" fill="#fff" stroke="#a0a0a0"/><path d="M2 4.5h5" stroke="#1e3287" stroke-width="1"/><path d="M4.5 2v5" stroke="#1e3287" stroke-width="1"/></svg><svg style="left:128px;top:432px" width="13" height="11" viewBox="0 0 13 11" shape-rendering="crispEdges"><rect x="4" y="0" width="9" height="2" fill="#dcb67a"/><rect x="5" y="1" width="7" height="1" fill="#fbf3e2"/><rect x="0" y="2" width="13" height="9" fill="#dcb67a"/></svg><div class="row" style="left:147px;top:429px">Triggers</div><svg style="left:111px;top:453px" width="9" height="9" viewBox="0 0 9 9"><rect x="0.5" y="0.5" width="8" height="8" fill="#fff" stroke="#a0a0a0"/><path d="M2 4.5h5" stroke="#1e3287" stroke-width="1"/><path d="M4.5 2v5" stroke="#1e3287" stroke-width="1"/></svg><svg style="left:128px;top:450px" width="13" height="11" viewBox="0 0 13 11" shape-rendering="crispEdges"><rect x="4" y="0" width="9" height="2" fill="#dcb67a"/><rect x="5" y="1" width="7" height="1" fill="#fbf3e2"/><rect x="0" y="2" width="13" height="9" fill="#dcb67a"/></svg><div class="row" style="left:147px;top:447px">Indexes</div><svg style="left:111px;top:471px" width="9" height="9" viewBox="0 0 9 9"><rect x="0.5" y="0.5" width="8" height="8" fill="#fff" stroke="#a0a0a0"/><path d="M2 4.5h5" stroke="#1e3287" stroke-width="1"/><path d="M4.5 2v5" stroke="#1e3287" stroke-width="1"/></svg><svg style="left:128px;top:468px" width="13" height="11" viewBox="0 0 13 11" shape-rendering="crispEdges"><rect x="4" y="0" width="9" height="2" fill="#dcb67a"/><rect x="5" y="1" width="7" height="1" fill="#fbf3e2"/><rect x="0" y="2" width="13" height="9" fill="#dcb67a"/></svg><div class="row" style="left:147px;top:465px">Statistics</div><svg style="left:92px;top:489px" width="9" height="9" viewBox="0 0 9 9"><rect x="0.5" y="0.5" width="8" height="8" fill="#fff" stroke="#a0a0a0"/><path d="M2 4.5h5" stroke="#1e3287" stroke-width="1"/><path d="M4.5 2v5" stroke="#1e3287" stroke-width="1"/></svg><svg style="left:109px;top:485px" width="14" height="13" viewBox="0 0 14 13"><rect x="0.5" y="0.5" width="13" height="12" fill="#fff" stroke="#3a3a3a"/><rect x="0.5" y="0.5" width="13" height="3" fill="#3a3a3a"/><path d="M0 6.5h14M0 9.5h14M4.5 3v10M9.5 3v10" stroke="#3a3a3a"/></svg><div class="row" style="left:128px;top:483px">dbo.Ins_Course</div><svg style="left:92px;top:507px" width="9" height="9" viewBox="0 0 9 9"><rect x="0.5" y="0.5" width="8" height="8" fill="#fff" stroke="#a0a0a0"/><path d="M2 4.5h5" stroke="#1e3287" stroke-width="1"/><path d="M4.5 2v5" stroke="#1e3287" stroke-width="1"/></svg><svg style="left:109px;top:503px" width="14" height="13" viewBox="0 0 14 13"><rect x="0.5" y="0.5" width="13" height="12" fill="#fff" stroke="#3a3a3a"/><rect x="0.5" y="0.5" width="13" height="3" fill="#3a3a3a"/><path d="M0 6.5h14M0 9.5h14M4.5 3v10M9.5 3v10" stroke="#3a3a3a"/></svg><div class="row" style="left:128px;top:501px">dbo.Instructor</div><svg style="left:92px;top:525px" width="9" height="9" viewBox="0 0 9 9"><rect x="0.5" y="0.5" width="8" height="8" fill="#fff" stroke="#a0a0a0"/><path d="M2 4.5h5" stroke="#1e3287" stroke-width="1"/><path d="M4.5 2v5" stroke="#1e3287" stroke-width="1"/></svg><svg style="left:109px;top:521px" width="14" height="13" viewBox="0 0 14 13"><rect x="0.5" y="0.5" width="13" height="12" fill="#fff" stroke="#3a3a3a"/><rect x="0.5" y="0.5" width="13" height="3" fill="#3a3a3a"/><path d="M0 6.5h14M0 9.5h14M4.5 3v10M9.5 3v10" stroke="#3a3a3a"/></svg><div class="row" style="left:128px;top:519px">dbo.Stud_Course</div><svg style="left:92px;top:543px" width="9" height="9" viewBox="0 0 9 9"><rect x="0.5" y="0.5" width="8" height="8" fill="#fff" stroke="#a0a0a0"/><path d="M2 4.5h5" stroke="#1e3287" stroke-width="1"/></svg><svg style="left:109px;top:539px" width="14" height="13" viewBox="0 0 14 13"><rect x="0.5" y="0.5" width="13" height="12" fill="#fff" stroke="#3a3a3a"/><rect x="0.5" y="0.5" width="13" height="3" fill="#3a3a3a"/><path d="M0 6.5h14M0 9.5h14M4.5 3v10M9.5 3v10" stroke="#3a3a3a"/></svg><div class="row" style="left:128px;top:537px">dbo.Student</div><svg style="left:111px;top:561px" width="9" height="9" viewBox="0 0 9 9"><rect x="0.5" y="0.5" width="8" height="8" fill="#fff" stroke="#a0a0a0"/><path d="M2 4.5h5" stroke="#1e3287" stroke-width="1"/></svg><svg style="left:128px;top:558px" width="13" height="11" viewBox="0 0 13 11" shape-rendering="crispEdges"><rect x="4" y="0" width="9" height="2" fill="#dcb67a"/><rect x="5" y="1" width="7" height="1" fill="#fbf3e2"/><rect x="0" y="2" width="13" height="9" fill="#dcb67a"/></svg><div class="row" style="left:147px;top:555px">Columns</div><svg style="left:146px;top:577px" width="14" height="8" viewBox="0 0 14 8"><circle cx="10.3" cy="3.8" r="2.4" fill="none" stroke="#2e2e2e" stroke-width="2"/><path d="M0.5 3.8h7.5M1.5 3.8v3M3.8 3.8v2.5" stroke="#2e2e2e" stroke-width="1.5"/></svg><div class="row" style="left:166px;top:573px">St_Id (PK, int, not null)</div><svg style="left:149px;top:593px" width="8" height="14" viewBox="0 0 8 14" shape-rendering="crispEdges"><rect x="0.5" y="0.5" width="7" height="13" fill="#fff" stroke="#303030" stroke-width="1"/><rect x="0" y="0" width="8" height="2" fill="#303030"/><path d="M1 4.5h6M1 7.5h6M1 10.5h6" stroke="#555" stroke-width="1"/></svg><div class="row" style="left:166px;top:591px">St_Fname (nvarchar(50), null)</div><svg style="left:149px;top:611px" width="8" height="14" viewBox="0 0 8 14" shape-rendering="crispEdges"><rect x="0.5" y="0.5" width="7" height="13" fill="#fff" stroke="#303030" stroke-width="1"/><rect x="0" y="0" width="8" height="2" fill="#303030"/><path d="M1 4.5h6M1 7.5h6M1 10.5h6" stroke="#555" stroke-width="1"/></svg><div class="row" style="left:166px;top:609px">St_Lname (nchar(10), null)</div><svg style="left:149px;top:629px" width="8" height="14" viewBox="0 0 8 14" shape-rendering="crispEdges"><rect x="0.5" y="0.5" width="7" height="13" fill="#fff" stroke="#303030" stroke-width="1"/><rect x="0" y="0" width="8" height="2" fill="#303030"/><path d="M1 4.5h6M1 7.5h6M1 10.5h6" stroke="#555" stroke-width="1"/></svg><div class="row" style="left:166px;top:627px">St_Address (nvarchar(100), null)</div><svg style="left:149px;top:647px" width="8" height="14" viewBox="0 0 8 14" shape-rendering="crispEdges"><rect x="0.5" y="0.5" width="7" height="13" fill="#fff" stroke="#303030" stroke-width="1"/><rect x="0" y="0" width="8" height="2" fill="#303030"/><path d="M1 4.5h6M1 7.5h6M1 10.5h6" stroke="#555" stroke-width="1"/></svg><div class="row" style="left:166px;top:645px">St_Age (int, null)</div><svg style="left:146px;top:667px" width="15" height="9" viewBox="0 0 15 9"><circle cx="4" cy="4.5" r="3.3" fill="none" stroke="#2e2e2e" stroke-width="1.2"/><circle cx="3.3" cy="4.5" r="1" fill="#2e2e2e"/><path d="M7.3 3.3h7.2v2.4H7.3M10 1.5v1.8M12.5 1.5v1.8" fill="none" stroke="#2e2e2e" stroke-width="1"/></svg><div class="row" style="left:166px;top:663px">Dept_Id (FK, int, null)</div><svg style="left:146px;top:685px" width="15" height="9" viewBox="0 0 15 9"><circle cx="4" cy="4.5" r="3.3" fill="none" stroke="#2e2e2e" stroke-width="1.2"/><circle cx="3.3" cy="4.5" r="1" fill="#2e2e2e"/><path d="M7.3 3.3h7.2v2.4H7.3M10 1.5v1.8M12.5 1.5v1.8" fill="none" stroke="#2e2e2e" stroke-width="1"/></svg><div class="row" style="left:166px;top:681px">St_super (FK, int, null)</div><svg style="left:111px;top:705px" width="9" height="9" viewBox="0 0 9 9"><rect x="0.5" y="0.5" width="8" height="8" fill="#fff" stroke="#a0a0a0"/><path d="M2 4.5h5" stroke="#1e3287" stroke-width="1"/><path d="M4.5 2v5" stroke="#1e3287" stroke-width="1"/></svg><svg style="left:128px;top:702px" width="13" height="11" viewBox="0 0 13 11" shape-rendering="crispEdges"><rect x="4" y="0" width="9" height="2" fill="#dcb67a"/><rect x="5" y="1" width="7" height="1" fill="#fbf3e2"/><rect x="0" y="2" width="13" height="9" fill="#dcb67a"/></svg><div class="row" style="left:147px;top:699px">Keys</div><svg style="left:111px;top:723px" width="9" height="9" viewBox="0 0 9 9"><rect x="0.5" y="0.5" width="8" height="8" fill="#fff" stroke="#a0a0a0"/><path d="M2 4.5h5" stroke="#1e3287" stroke-width="1"/><path d="M4.5 2v5" stroke="#1e3287" stroke-width="1"/></svg><svg style="left:128px;top:720px" width="13" height="11" viewBox="0 0 13 11" shape-rendering="crispEdges"><rect x="4" y="0" width="9" height="2" fill="#dcb67a"/><rect x="5" y="1" width="7" height="1" fill="#fbf3e2"/><rect x="0" y="2" width="13" height="9" fill="#dcb67a"/></svg><div class="row" style="left:147px;top:717px">Constraints</div><svg style="left:111px;top:741px" width="9" height="9" viewBox="0 0 9 9"><rect x="0.5" y="0.5" width="8" height="8" fill="#fff" stroke="#a0a0a0"/><path d="M2 4.5h5" stroke="#1e3287" stroke-width="1"/><path d="M4.5 2v5" stroke="#1e3287" stroke-width="1"/></svg><svg style="left:128px;top:738px" width="13" height="11" viewBox="0 0 13 11" shape-rendering="crispEdges"><rect x="4" y="0" width="9" height="2" fill="#dcb67a"/><rect x="5" y="1" width="7" height="1" fill="#fbf3e2"/><rect x="0" y="2" width="13" height="9" fill="#dcb67a"/></svg><div class="row" style="left:147px;top:735px">Triggers</div><svg style="left:111px;top:759px" width="9" height="9" viewBox="0 0 9 9"><rect x="0.5" y="0.5" width="8" height="8" fill="#fff" stroke="#a0a0a0"/><path d="M2 4.5h5" stroke="#1e3287" stroke-width="1"/><path d="M4.5 2v5" stroke="#1e3287" stroke-width="1"/></svg><svg style="left:128px;top:756px" width="13" height="11" viewBox="0 0 13 11" shape-rendering="crispEdges"><rect x="4" y="0" width="9" height="2" fill="#dcb67a"/><rect x="5" y="1" width="7" height="1" fill="#fbf3e2"/><rect x="0" y="2" width="13" height="9" fill="#dcb67a"/></svg><div class="row" style="left:147px;top:753px">Indexes</div><svg style="left:111px;top:777px" width="9" height="9" viewBox="0 0 9 9"><rect x="0.5" y="0.5" width="8" height="8" fill="#fff" stroke="#a0a0a0"/><path d="M2 4.5h5" stroke="#1e3287" stroke-width="1"/><path d="M4.5 2v5" stroke="#1e3287" stroke-width="1"/></svg><svg style="left:128px;top:774px" width="13" height="11" viewBox="0 0 13 11" shape-rendering="crispEdges"><rect x="4" y="0" width="9" height="2" fill="#dcb67a"/><rect x="5" y="1" width="7" height="1" fill="#fbf3e2"/><rect x="0" y="2" width="13" height="9" fill="#dcb67a"/></svg><div class="row" style="left:147px;top:771px">Statistics</div><svg style="left:92px;top:795px" width="9" height="9" viewBox="0 0 9 9"><rect x="0.5" y="0.5" width="8" height="8" fill="#fff" stroke="#a0a0a0"/><path d="M2 4.5h5" stroke="#1e3287" stroke-width="1"/><path d="M4.5 2v5" stroke="#1e3287" stroke-width="1"/></svg><svg style="left:109px;top:791px" width="14" height="13" viewBox="0 0 14 13"><rect x="0.5" y="0.5" width="13" height="12" fill="#fff" stroke="#3a3a3a"/><rect x="0.5" y="0.5" width="13" height="3" fill="#3a3a3a"/><path d="M0 6.5h14M0 9.5h14M4.5 3v10M9.5 3v10" stroke="#3a3a3a"/></svg><div class="row" style="left:128px;top:789px">dbo.Topic</div><svg style="left:92px;top:813px" width="9" height="9" viewBox="0 0 9 9"><rect x="0.5" y="0.5" width="8" height="8" fill="#fff" stroke="#a0a0a0"/><path d="M2 4.5h5" stroke="#1e3287" stroke-width="1"/><path d="M4.5 2v5" stroke="#1e3287" stroke-width="1"/></svg><svg style="left:109px;top:810px" width="13" height="11" viewBox="0 0 13 11" shape-rendering="crispEdges"><rect x="4" y="0" width="9" height="2" fill="#dcb67a"/><rect x="5" y="1" width="7" height="1" fill="#fbf3e2"/><rect x="0" y="2" width="13" height="9" fill="#dcb67a"/></svg><div class="row" style="left:128px;top:807px">Dropped Ledger Tables</div><svg style="left:73px;top:831px" width="9" height="9" viewBox="0 0 9 9"><rect x="0.5" y="0.5" width="8" height="8" fill="#fff" stroke="#a0a0a0"/><path d="M2 4.5h5" stroke="#1e3287" stroke-width="1"/><path d="M4.5 2v5" stroke="#1e3287" stroke-width="1"/></svg><svg style="left:90px;top:828px" width="13" height="11" viewBox="0 0 13 11" shape-rendering="crispEdges"><rect x="4" y="0" width="9" height="2" fill="#dcb67a"/><rect x="5" y="1" width="7" height="1" fill="#fbf3e2"/><rect x="0" y="2" width="13" height="9" fill="#dcb67a"/></svg><div class="row" style="left:109px;top:825px">Views</div><svg style="left:73px;top:849px" width="9" height="9" viewBox="0 0 9 9"><rect x="0.5" y="0.5" width="8" height="8" fill="#fff" stroke="#a0a0a0"/><path d="M2 4.5h5" stroke="#1e3287" stroke-width="1"/><path d="M4.5 2v5" stroke="#1e3287" stroke-width="1"/></svg><svg style="left:90px;top:846px" width="13" height="11" viewBox="0 0 13 11" shape-rendering="crispEdges"><rect x="4" y="0" width="9" height="2" fill="#dcb67a"/><rect x="5" y="1" width="7" height="1" fill="#fbf3e2"/><rect x="0" y="2" width="13" height="9" fill="#dcb67a"/></svg><div class="row" style="left:109px;top:843px">External Resources</div><svg style="left:73px;top:867px" width="9" height="9" viewBox="0 0 9 9"><rect x="0.5" y="0.5" width="8" height="8" fill="#fff" stroke="#a0a0a0"/><path d="M2 4.5h5" stroke="#1e3287" stroke-width="1"/><path d="M4.5 2v5" stroke="#1e3287" stroke-width="1"/></svg><svg style="left:90px;top:864px" width="13" height="11" viewBox="0 0 13 11" shape-rendering="crispEdges"><rect x="4" y="0" width="9" height="2" fill="#dcb67a"/><rect x="5" y="1" width="7" height="1" fill="#fbf3e2"/><rect x="0" y="2" width="13" height="9" fill="#dcb67a"/></svg><div class="row" style="left:109px;top:861px">Synonyms</div><svg style="left:73px;top:885px" width="9" height="9" viewBox="0 0 9 9"><rect x="0.5" y="0.5" width="8" height="8" fill="#fff" stroke="#a0a0a0"/><path d="M2 4.5h5" stroke="#1e3287" stroke-width="1"/><path d="M4.5 2v5" stroke="#1e3287" stroke-width="1"/></svg><svg style="left:90px;top:882px" width="13" height="11" viewBox="0 0 13 11" shape-rendering="crispEdges"><rect x="4" y="0" width="9" height="2" fill="#dcb67a"/><rect x="5" y="1" width="7" height="1" fill="#fbf3e2"/><rect x="0" y="2" width="13" height="9" fill="#dcb67a"/></svg><div class="row" style="left:109px;top:879px">Programmability</div><svg style="left:73px;top:903px" width="9" height="9" viewBox="0 0 9 9"><rect x="0.5" y="0.5" width="8" height="8" fill="#fff" stroke="#a0a0a0"/><path d="M2 4.5h5" stroke="#1e3287" stroke-width="1"/><path d="M4.5 2v5" stroke="#1e3287" stroke-width="1"/></svg><svg style="left:90px;top:900px" width="13" height="11" viewBox="0 0 13 11" shape-rendering="crispEdges"><rect x="4" y="0" width="9" height="2" fill="#dcb67a"/><rect x="5" y="1" width="7" height="1" fill="#fbf3e2"/><rect x="0" y="2" width="13" height="9" fill="#dcb67a"/></svg><div class="row" style="left:109px;top:897px">Service Broker</div><svg style="left:73px;top:921px" width="9" height="9" viewBox="0 0 9 9"><rect x="0.5" y="0.5" width="8" height="8" fill="#fff" stroke="#a0a0a0"/><path d="M2 4.5h5" stroke="#1e3287" stroke-width="1"/><path d="M4.5 2v5" stroke="#1e3287" stroke-width="1"/></svg><svg style="left:90px;top:918px" width="13" height="11" viewBox="0 0 13 11" shape-rendering="crispEdges"><rect x="4" y="0" width="9" height="2" fill="#dcb67a"/><rect x="5" y="1" width="7" height="1" fill="#fbf3e2"/><rect x="0" y="2" width="13" height="9" fill="#dcb67a"/></svg><div class="row" style="left:109px;top:915px">Storage</div><svg style="left:73px;top:939px" width="9" height="9" viewBox="0 0 9 9"><rect x="0.5" y="0.5" width="8" height="8" fill="#fff" stroke="#a0a0a0"/><path d="M2 4.5h5" stroke="#1e3287" stroke-width="1"/><path d="M4.5 2v5" stroke="#1e3287" stroke-width="1"/></svg><svg style="left:90px;top:936px" width="13" height="11" viewBox="0 0 13 11" shape-rendering="crispEdges"><rect x="4" y="0" width="9" height="2" fill="#dcb67a"/><rect x="5" y="1" width="7" height="1" fill="#fbf3e2"/><rect x="0" y="2" width="13" height="9" fill="#dcb67a"/></svg><div class="row" style="left:109px;top:933px">Security</div><svg style="left:54px;top:957px" width="9" height="9" viewBox="0 0 9 9"><rect x="0.5" y="0.5" width="8" height="8" fill="#fff" stroke="#a0a0a0"/><path d="M2 4.5h5" stroke="#1e3287" stroke-width="1"/><path d="M4.5 2v5" stroke="#1e3287" stroke-width="1"/></svg><svg style="left:71px;top:952px" width="13" height="15" viewBox="0 0 13 15"><path d="M0.5 3v9a6 2.5 0 0 0 12 0V3z" fill="#3a3a3a"/><ellipse cx="6.5" cy="3" rx="6" ry="2.5" fill="#3a3a3a"/><ellipse cx="6.5" cy="3" rx="4.5" ry="1.5" fill="#e8e8e8"/></svg><div class="row" style="left:90px;top:951px">lab3</div><svg style="left:54px;top:975px" width="9" height="9" viewBox="0 0 9 9"><rect x="0.5" y="0.5" width="8" height="8" fill="#fff" stroke="#a0a0a0"/><path d="M2 4.5h5" stroke="#1e3287" stroke-width="1"/><path d="M4.5 2v5" stroke="#1e3287" stroke-width="1"/></svg><svg style="left:71px;top:970px" width="13" height="15" viewBox="0 0 13 15"><path d="M0.5 3v9a6 2.5 0 0 0 12 0V3z" fill="#3a3a3a"/><ellipse cx="6.5" cy="3" rx="6" ry="2.5" fill="#3a3a3a"/><ellipse cx="6.5" cy="3" rx="4.5" ry="1.5" fill="#e8e8e8"/></svg><div class="row" style="left:90px;top:969px">training</div><svg style="left:35px;top:993px" width="9" height="9" viewBox="0 0 9 9"><rect x="0.5" y="0.5" width="8" height="8" fill="#fff" stroke="#a0a0a0"/><path d="M2 4.5h5" stroke="#1e3287" stroke-width="1"/><path d="M4.5 2v5" stroke="#1e3287" stroke-width="1"/></svg><svg style="left:52px;top:990px" width="13" height="11" viewBox="0 0 13 11" shape-rendering="crispEdges"><rect x="4" y="0" width="9" height="2" fill="#dcb67a"/><rect x="5" y="1" width="7" height="1" fill="#fbf3e2"/><rect x="0" y="2" width="13" height="9" fill="#dcb67a"/></svg><div class="row" style="left:71px;top:987px">Security</div></div></div>
<div class="a" style="left:322px;top:109px;width:258px;height:19px;background:#364e6f;"></div>
<div class="t" style="left:327.3px;top:113px;color:#fff;letter-spacing:-0.080px;transform:scaleX(0.9496);transform-origin:0 0">SQLQuery4.sql - DE...-UBF7E24\len (53))</div>
<div class="a" style="left:580px;top:109px;width:256px;height:21px;background:#fff29d;"></div>
<div class="t" style="left:584px;top:113px;color:#1e1e1e;letter-spacing:-0.080px;transform:scaleX(0.9501);transform-origin:0 0">SQLQuery3.sql - DE...-UBF7E24\len (52))</div>
<svg style="left:803px;top:115px;" width="9" height="9" viewBox="0 0 9 9"><path d="M0 4.5h3.5M3.6 0.5v7.5M3.6 1.8h4.1v4.6H3.6" fill="none" stroke="#5a3a30" stroke-width="1.1"/></svg>
<svg style="left:821px;top:115px;" width="10" height="9" viewBox="0 0 10 9"><path d="M0.7 0.7l8.3 7.6M9 0.7L0.7 8.3" stroke="#5a3a30" stroke-width="1.1"/></svg>
<div class="a" style="left:836px;top:109px;width:267px;height:19px;background:#364e6f;"></div>
<div class="t" style="left:841px;top:113px;color:#fff;letter-spacing:-0.080px;transform:scaleX(0.9448);transform-origin:0 0">lab2.sql - DESKTOP...P-UBF7E24\len (65))*</div>
<svg style="left:1903px;top:118px;" width="9" height="5" viewBox="0 0 9 5"><path d="M0 0h8l-4 4z" fill="#d8dce6"/></svg>
<div class="a" style="left:322px;top:128px;width:1592px;height:2px;background:#fff29d;"></div>
<div class="a" style="left:322px;top:130px;width:1572px;height:850px;background:#ffffff;"></div>
<div class="a" style="left:322px;top:130px;width:41px;height:850px;background:#e6e7e8;"></div>
<div class="a" style="left:1894px;top:130px;width:20px;height:850px;background:#e8e8ec;"></div>
<div class="a" style="left:1894px;top:130px;width:19px;height:17px;background:#eaeff8;border-left:1px solid #9aa6bd;border-bottom:1px solid #9aa6bd"></div>
<svg style="left:1897px;top:132px;" width="13" height="13" viewBox="0 0 13 13"><path d="M1 6h11M1 8h11M6.5 1v4M6.5 9v4" fill="none" stroke="#1e1e1e" stroke-width="1.1"/><path d="M4.5 3l2-2.5 2 2.5zM4.5 11l2 2.5 2-2.5z" fill="#1e1e1e"/></svg>
<svg style="left:1899px;top:152px;" width="10" height="6" viewBox="0 0 10 6"><path d="M0 6l5-5 5 5z" fill="#8d9093"/></svg>
<div class="a" style="left:1894px;top:179px;width:19px;height:2px;background:#0000ff;"></div>
<div class="a" style="left:1907px;top:175px;width:5px;height:4px;background:#ff0000;"></div>
<div class="a" style="left:1907px;top:255px;width:5px;height:5px;background:#ff0000;"></div>
<div class="a" style="left:1907px;top:392px;width:5px;height:5px;background:#ff0000;"></div>
<div class="a" style="left:1898px;top:531px;width:11px;height:112px;background:#c2c3c9;"></div>
<div class="a" style="left:1907px;top:637px;width:5px;height:16px;background:#ff0000;"></div>
<div class="a" style="left:1907px;top:656px;width:5px;height:15px;background:#ff0000;"></div>
<div class="a" style="left:1907px;top:679px;width:5px;height:15px;background:#ff0000;"></div>
<div class="a" style="left:1907px;top:712px;width:5px;height:15px;background:#ff0000;"></div>
<div class="a" style="left:1907px;top:739px;width:5px;height:11px;background:#ff0000;"></div>
<div class="a" style="left:322px;top:980px;width:1592px;height:18px;background:#e8e8ec;"></div>
<div class="a" style="left:323px;top:980px;width:60px;height:17px;background:#fff;border:1px solid #c9d1e3"></div>
<div class="t" style="left:325px;top:982px;;letter-spacing:-0.080px;transform:scaleX(0.9665);transform-origin:0 0">236 %</div>
<svg style="left:373px;top:987px;" width="6" height="4" viewBox="0 0 6 4"><path d="M0 0h6l-3 3.5z" fill="#1e1e1e"/></svg>
<svg style="left:388px;top:984px;" width="6" height="10" viewBox="0 0 6 10"><path d="M6 0v10L0 5z" fill="#8d9093"/></svg>
<div class="a" style="left:400px;top:984px;width:843px;height:9px;background:#c2c3c9;"></div>
<svg style="left:1883px;top:984px;" width="6" height="10" viewBox="0 0 6 10"><path d="M0 0v10l6-5z" fill="#8d9093"/></svg>
<svg style="left:1885px;top:955px;" width="42" height="42" viewBox="0 0 42 42"><circle cx="21" cy="21" r="20.3" fill="#000" stroke="#5a6a70" stroke-width="1.2"/><path d="M26 11L15 21l11 10" fill="none" stroke="#7a7a7a" stroke-width="3" stroke-linecap="round" stroke-linejoin="round"/></svg>
<div class="a" style="left:398px;top:130px;width:2px;height:850px;background:#a5a5a5;"></div>
<div class="a" style="left:387px;top:296.5px;width:21px;height:27px;background:#fff"></div>
<div class="a" style="left:387px;top:299.5px;width:21px;height:21px;background:#fff;border:2px solid #a5a5a5"></div>
<div class="a" style="left:391px;top:308.5px;width:12px;height:3px;background:#3c3c3c"></div>
<div class="a" style="left:387px;top:416.9px;width:21px;height:27px;background:#fff"></div>
<div class="a" style="left:387px;top:419.9px;width:21px;height:21px;background:#fff;border:2px solid #a5a5a5"></div>
<div class="a" style="left:391px;top:428.9px;width:12px;height:3px;background:#3c3c3c"></div>
<div class="a" style="left:387px;top:577.4px;width:21px;height:27px;background:#fff"></div>
<div class="a" style="left:387px;top:580.4px;width:21px;height:21px;background:#fff;border:2px solid #a5a5a5"></div>
<div class="a" style="left:391px;top:589.4px;width:12px;height:3px;background:#3c3c3c"></div>
<div class="a" style="left:387px;top:938.5px;width:21px;height:27px;background:#fff"></div>
<div class="a" style="left:387px;top:941.5px;width:21px;height:21px;background:#fff;border:2px solid #a5a5a5"></div>
<div class="a" style="left:391px;top:950.5px;width:12px;height:3px;background:#3c3c3c"></div>
<div class="a" style="left:398px;top:367.6px;width:10px;height:2px;background:#a5a5a5"></div>
<div class="a" style="left:398px;top:528.1px;width:10px;height:2px;background:#a5a5a5"></div>
<div class="a" style="left:398px;top:688.6px;width:10px;height:2px;background:#a5a5a5"></div>
<div class="a" style="left:363px;top:130px;width:1531px;height:850px;overflow:hidden"><div class="a" style="left:-363px;top:0;width:1920px;height:850px"><div class="code" style="top:80.35px"><span class="cm">/*testing*/</span></div><div class="code" style="top:160.60px"><span class="kw">INSERT INTO</span> Works_on</div><div class="code" style="top:200.72px"><span class="kw">VALUES</span> <span class="gr">(</span>11111  <span class="gr">,</span><span class="st">'p1'</span><span class="gr">,</span><span class="st">'Analyst'</span> <span class="gr">,</span> <span class="st">'2006/10/1'</span> <span class="gr">)</span> <span class="cm">/*couldnt add the employee due to foreign key*/</span></div><div class="code" style="top:280.98px"><span class="mg">update</span> Works_on</div><div class="code" style="top:321.10px"><span class="kw">set</span> EmpNo <span class="gr">=</span>11111</div><div class="code" style="top:361.23px"><span class="kw">where</span> EmpNo<span class="gr">=</span>10102</div><div class="code" style="top:441.48px"><span class="mg">update</span> Employee</div><div class="code" style="top:481.60px"><span class="kw">set</span> EmpNo <span class="gr">=</span>22222</div><div class="code" style="top:521.73px"><span class="kw">where</span> EmpNo<span class="gr">=</span>10102</div><div class="code" style="top:601.98px"><span class="kw">DELETE FROM</span> employee  <span class="kw">WHERE</span> EmpNo<span class="gr">=</span>10102<span class="gr">;</span></div><div class="code" style="top:722.35px"><span class="cm">/*modification*/</span></div><div class="code" style="top:802.60px"><span class="kw">alter table</span> employee</div></div></div>
<div class="a" style="left:322px;top:998px;width:1591px;height:22px;background:#f0e68c;"></div>
<div class="a" style="left:322px;top:997px;width:1px;height:24px;background:#9eabc8;"></div>
<div class="a" style="left:322px;top:1020px;width:1592px;height:1px;background:#9eabc8;"></div>
<svg style="left:326px;top:1001px;" width="17" height="16" viewBox="0 0 17 16"><rect x="1.5" y="0" width="2" height="4" fill="#1e1e1e"/><rect x="5.5" y="0" width="2" height="4" fill="#1e1e1e"/><path d="M0 4h9v3l-2.5 3h-4L0 7z" fill="#1e1e1e"/><rect x="3.5" y="9" width="2" height="7" fill="#1e1e1e"/><circle cx="11.5" cy="11.5" r="4.2" fill="#339933"/><path d="M9.3 11.5l1.6 1.6 2.8-3" fill="none" stroke="#fff" stroke-width="1.3"/></svg>
<div class="t" style="left:346px;top:1002px;;letter-spacing:0.026px">Connected. (1/1)</div>
<div class="a" style="left:1451px;top:1002px;width:1px;height:14px;background:#aaa27a;"></div>
<div class="a" style="left:1452px;top:1002px;width:1px;height:14px;background:#fbf8e8;"></div>
<div class="a" style="left:1620px;top:1002px;width:1px;height:14px;background:#aaa27a;"></div>
<div class="a" style="left:1621px;top:1002px;width:1px;height:14px;background:#fbf8e8;"></div>
<div class="a" style="left:1776px;top:1002px;width:1px;height:14px;background:#aaa27a;"></div>
<div class="a" style="left:1777px;top:1002px;width:1px;height:14px;background:#fbf8e8;"></div>
<div class="a" style="left:1800px;top:1002px;width:1px;height:14px;background:#aaa27a;"></div>
<div class="a" style="left:1801px;top:1002px;width:1px;height:14px;background:#fbf8e8;"></div>
<div class="a" style="left:1856px;top:1002px;width:1px;height:14px;background:#aaa27a;"></div>
<div class="a" style="left:1857px;top:1002px;width:1px;height:14px;background:#fbf8e8;"></div>
<div class="t" style="left:1457.3px;top:1002px;;letter-spacing:-0.080px;transform:scaleX(0.8933);transform-origin:0 0">DESKTOP-UBF7E24 (16.0 RTM)</div>
<div class="t" style="left:1626px;top:1002px;;letter-spacing:-0.080px;transform:scaleX(0.9153);transform-origin:0 0">DESKTOP-UBF7E24\len (52)</div>
<div class="t" style="left:1781px;top:1002px;;letter-spacing:-0.080px;transform:scaleX(0.8577);transform-origin:0 0">ITI</div>
<div class="t" style="left:1806px;top:1002px;;letter-spacing:-0.080px;transform:scaleX(0.9290);transform-origin:0 0">00:00:00</div>
<div class="t" style="left:1860.7px;top:1002px;;letter-spacing:-0.080px;transform:scaleX(1.0068);transform-origin:0 0">0 rows</div>
<div class="a" style="left:0px;top:1027px;width:1920px;height:23px;background:#007acc;"></div>
<svg style="left:4px;top:1034px;" width="17" height="12" viewBox="0 0 17 12"><path d="M4 1h12l-3 10H1z" fill="none" stroke="#fff" stroke-width="1.3"/></svg>
<div class="t" style="left:28px;top:1032px;color:#fff;letter-spacing:-0.080px;transform:scaleX(0.9566);transform-origin:0 0">Ready</div>
<div class="t" style="left:1160.3px;top:1032px;color:#fff;letter-spacing:-0.080px;transform:scaleX(0.9724);transform-origin:0 0">Ln 4</div>
<div class="t" style="left:1252.8px;top:1032px;color:#fff;letter-spacing:-0.080px;transform:scaleX(0.9647);transform-origin:0 0">Col 26</div>
<div class="t" style="left:1344.4px;top:1032px;color:#fff;letter-spacing:-0.080px;transform:scaleX(0.9614);transform-origin:0 0">Ch 26</div>
<div class="t" style="left:1480.4px;top:1032px;color:#fff;letter-spacing:-0.080px;transform:scaleX(0.9209);transform-origin:0 0">INS</div>
<div class="a" style="left:0px;top:1050px;width:1920px;height:30px;background:#30363a;"></div>
<svg style="left:10px;top:1057px;" width="17" height="17" viewBox="0 0 17 17"><path d="M0 2.3l7-1v7H0zM8 1.2l9-1.2v8.3H8zM0 9.3h7v7l-7-1zM8 9.3h9v7.7l-9-1.2z" fill="#fff"/></svg>
<div class="a" style="left:36px;top:1050px;width:258px;height:30px;background:#f0f0f0;"></div>
<svg style="left:47px;top:1057px;" width="17" height="17" viewBox="0 0 17 17"><circle cx="10.5" cy="6.5" r="5.3" fill="none" stroke="#1e1e1e" stroke-width="1.4"/><path d="M6.7 10.3L1 16" stroke="#1e1e1e" stroke-width="1.6"/></svg>
<div class="t" style="left:76px;top:1058px;font-size:15px;color:#2b2b2b;letter-spacing:-0.100px;transform:scaleX(0.9547);transform-origin:0 0">Search</div>
<svg style="left:234px;top:1050px;" width="62" height="30" viewBox="0 0 62 30"><g opacity="0.95"><path d="M46 5q7 2 6.5 12v10M41 20l12 8M42 25h10" fill="none" stroke="#5aa84a" stroke-width="1.1"/><path d="M14 14h12M24 18.5h5M28 9l5 3.5" stroke="#5aa84a" stroke-width="1"/><ellipse cx="15.5" cy="9" rx="9" ry="3.2" transform="rotate(30 15.5 9)" fill="#e3a446"/><ellipse cx="23" cy="24.5" rx="7" ry="2.8" transform="rotate(-12 23 24.5)" fill="#e3a446"/><ellipse cx="43" cy="11" rx="9" ry="3.3" transform="rotate(62 43 11)" fill="#e3a446"/><circle cx="9" cy="15" r="2.6" fill="#6aaa5a"/><circle cx="32" cy="5.5" r="2.5" fill="#6aaa5a"/><circle cx="23.5" cy="8.5" r="5" fill="#a6b6f4"/><circle cx="19.5" cy="20.5" r="5.5" fill="#a6b6f4"/><circle cx="36" cy="17" r="6.5" fill="#a6b6f4"/><circle cx="23.5" cy="8.5" r="1.8" fill="#2a2a7a"/><circle cx="19.5" cy="20.5" r="2" fill="#2a2a7a"/><circle cx="36" cy="17" r="2.4" fill="#2a2a7a"/><circle cx="34.5" cy="16" r="1.2" fill="#8a3a8a"/></g></svg>
<svg style="left:303px;top:1057px;" width="17" height="16" viewBox="0 0 17 16"><rect x="0.5" y="3" width="11" height="10" fill="none" stroke="#fff" stroke-width="1.3"/><path d="M0 0.7h12M0 15.3h12M15 0v3M15 5v6M15 13v3" stroke="#fff" stroke-width="1.3"/></svg>
<svg style="left:343px;top:1057px;" width="17" height="17" viewBox="0 0 17 17"><path d="M0 2h6l2 2h8v12H0z" fill="#f0c040"/><rect x="0" y="6" width="16" height="10" fill="#f5d264"/><rect x="4" y="9" width="8" height="4" fill="#1e7ad6"/><rect x="6" y="12" width="4" height="4" fill="#1e7ad6"/></svg>
<svg style="left:379px;top:1057px;" width="17" height="17" viewBox="0 0 17 17"><circle cx="8.5" cy="8.5" r="8" fill="#dd4b3d"/><path d="M8.5 8.5L1.6 12.5A8 8 0 0 0 11 16.1z" fill="#3aa756"/><path d="M8.5 8.5L11 16.1A8 8 0 0 0 15.4 4.5z" fill="#f6c02e"/><circle cx="8.5" cy="8.5" r="3.8" fill="#fff"/><circle cx="8.5" cy="8.5" r="3" fill="#3d7ff2"/></svg>
<svg style="left:416px;top:1057px;" width="17" height="17" viewBox="0 0 17 17"><rect x="0" y="0" width="16" height="17" rx="3" fill="#111"/><circle cx="8" cy="8.5" r="5.5" fill="none" stroke="#3bb85a" stroke-width="2"/><circle cx="8" cy="8.5" r="3" fill="none" stroke="#8a4fd8" stroke-width="1.8"/></svg>
<svg style="left:453px;top:1057px;" width="17" height="17" viewBox="0 0 17 17"><rect x="0" y="0" width="17" height="15" rx="2" fill="#3aa0e8"/><path d="M5 4h5a3 3 0 0 1 0 6H5z" fill="none" stroke="#fff" stroke-width="1.6"/><rect x="4" y="15" width="9" height="2" fill="#e8e8e8"/></svg>
<svg style="left:490px;top:1057px;" width="17" height="17" viewBox="0 0 17 17"><path d="M8.5 1l7.5 7.5-7.5 7.5L1 8.5z" fill="#5a3d8a"/><path d="M6.5 5.5l5 3-5 3z" fill="#c8b0f0"/></svg>
<svg style="left:527px;top:1057px;" width="17" height="17" viewBox="0 0 17 17"><path d="M12 0l5 2.5v12L12 17 4 10l-3 2.5L0 11V6l1-1.5 3 2.5z" fill="#2388d6"/><path d="M12 4.5v8l-5-4z" fill="#30363a"/></svg>
<svg style="left:565px;top:1057px;" width="17" height="17" viewBox="0 0 17 17"><rect x="0" y="0" width="16" height="16" fill="#0a0a0a" stroke="#3c7bf0" stroke-width="1.2"/><text x="3" y="9" font-size="7" font-weight="bold" font-family="Liberation Sans" fill="#fff">IJ</text><rect x="3" y="12" width="6" height="1.3" fill="#fff"/></svg>
<svg style="left:602px;top:1057px;" width="17" height="17" viewBox="0 0 17 17"><rect x="1" y="1" width="14" height="16" fill="#f0f0e8"/><path d="M2 14l4-5 3 2 5-7" stroke="#3a9a3a" stroke-width="1.5" fill="none"/><rect x="1" y="13" width="14" height="4" fill="#8dbb5a"/></svg>
<svg style="left:640px;top:1057px;" width="17" height="17" viewBox="0 0 17 17"><path d="M1 0h13v14l-6.5 3L1 14z" fill="#111" stroke="#aaa" stroke-width="0.6"/><text x="7.5" y="9" font-size="5.5" font-weight="bold" font-family="Liberation Sans" text-anchor="middle" fill="#fff">EPIC</text></svg>
<svg style="left:675px;top:1057px;" width="17" height="17" viewBox="0 0 17 17"><circle cx="8.5" cy="8.5" r="8" fill="#5865f2"/><path d="M4 6q4.5-3 9 0l1 6q-2 1.5-3.5 1.5l-1-1.5h-2l-1 1.5Q5 13.5 3 12z" fill="#fff"/><circle cx="6.5" cy="9" r="1.1" fill="#5865f2"/><circle cx="10.5" cy="9" r="1.1" fill="#5865f2"/></svg>
<svg style="left:713px;top:1057px;" width="17" height="17" viewBox="0 0 17 17"><circle cx="8.5" cy="8.5" r="8" fill="#76b83f"/><path d="M5 4v5a3.5 3.5 0 0 0 7 0V4" fill="none" stroke="#fff" stroke-width="2.4"/></svg>
<svg style="left:750px;top:1057px;" width="17" height="17" viewBox="0 0 17 17"><rect x="4" y="1" width="13" height="15" fill="#21a366"/><rect x="0" y="3" width="10" height="11" fill="#107c41"/><path d="M2.5 5.5l5 6M7.5 5.5l-5 6" stroke="#fff" stroke-width="1.6"/></svg>
<svg style="left:786px;top:1057px;" width="17" height="17" viewBox="0 0 17 17"><circle cx="8.5" cy="8.5" r="7.5" fill="none" stroke="#e8e8e8" stroke-width="1.6"/><path d="M2 16l1.5-4" stroke="#e8e8e8" stroke-width="1.6"/><path d="M6 5q0 6 6 7l1-2-2-1-1 1q-2-1-3-3l1-1-1-2z" fill="#e8e8e8"/></svg>
<svg style="left:825px;top:1057px;" width="17" height="17" viewBox="0 0 17 17"><rect x="0" y="0" width="14" height="17" fill="#5f6870"/><rect x="2" y="2" width="10" height="3" fill="#9ec4e8"/><path d="M2 7h2v2H2zM6 7h2v2H6zM10 7h2v2h-2zM2 11h2v2H2zM6 11h2v2H6zM10 11h2v5h-2zM2 14h2v2H2zM6 14h2v2H6z" fill="#e8e8e8"/></svg>
<svg style="left:861px;top:1057px;" width="17" height="17" viewBox="0 0 17 17"><rect x="0" y="0" width="16" height="16" fill="#3a1010"/><rect x="0" y="0" width="16" height="16" fill="none" stroke="#b01818" stroke-width="1" stroke-dasharray="2 3"/><circle cx="8" cy="8.5" r="5" fill="none" stroke="#6a6a6a" stroke-width="2"/><circle cx="8" cy="8.5" r="2" fill="#e86a30"/></svg>
<svg style="left:898px;top:1057px;" width="17" height="17" viewBox="0 0 17 17"><rect x="4" y="1" width="13" height="15" fill="#41a5ee"/><rect x="0" y="3" width="10" height="11" fill="#185abd"/><path d="M1.5 5.5l1.5 6 2-5 2 5 1.5-6" fill="none" stroke="#fff" stroke-width="1.2"/></svg>
<svg style="left:935px;top:1057px;" width="17" height="17" viewBox="0 0 17 17"><rect x="0" y="0" width="16" height="16" fill="#3a1010"/><rect x="0" y="0" width="16" height="16" fill="none" stroke="#b01818" stroke-width="1" stroke-dasharray="2 3"/><circle cx="8" cy="8.5" r="5" fill="none" stroke="#6a6a6a" stroke-width="2"/><circle cx="8" cy="8.5" r="2" fill="#e86a30"/></svg>
<div class="a" style="left:962px;top:1050px;width:36px;height:30px;background:#a76e38;"></div>
<div class="a" style="left:962px;top:1078px;width:36px;height:2px;background:#f39a3c;"></div>
<svg style="left:972px;top:1058px;" width="17" height="17" viewBox="0 0 17 17"><path d="M14 3.5A7 7 0 1 0 15 11H9" fill="none" stroke="#2ab0e8" stroke-width="3"/></svg>
<svg style="left:1008px;top:1057px;" width="17" height="17" viewBox="0 0 17 17"><circle cx="13" cy="4" r="2.5" fill="#7b83eb"/><rect x="9" y="6" width="8" height="8" rx="2" fill="#7b83eb"/><rect x="0" y="3" width="11" height="11" rx="1" fill="#4b53bc"/><path d="M2.5 6h6M5.5 6v6" stroke="#fff" stroke-width="1.6"/></svg>
<div class="a" style="left:1036px;top:1050px;width:36px;height:30px;background:#46555e;"></div>
<svg style="left:1045px;top:1057px;" width="18" height="18" viewBox="0 0 18 18"><rect x="2" y="1" width="9" height="11" fill="#f5d25a"/><path d="M12 1h5v5M1 12v5h5" fill="none" stroke="#3b9a3b" stroke-width="1.6"/><path d="M8 9l8 8M16 9l-8 8" stroke="#e8852a" stroke-width="2"/></svg>
<div class="a" style="left:337px;top:1078px;width:28px;height:2px;background:#9aa6ae;"></div>
<div class="a" style="left:374px;top:1078px;width:28px;height:2px;background:#9aa6ae;"></div>
<div class="a" style="left:411px;top:1078px;width:28px;height:2px;background:#9aa6ae;"></div>
<div class="a" style="left:707px;top:1078px;width:28px;height:2px;background:#9aa6ae;"></div>
<div class="a" style="left:892px;top:1078px;width:28px;height:2px;background:#9aa6ae;"></div>
<div class="a" style="left:929px;top:1078px;width:28px;height:2px;background:#9aa6ae;"></div>
<div class="a" style="left:1003px;top:1078px;width:19px;height:2px;background:#9aa6ae;"></div>
<div class="a" style="left:1023px;top:1078px;width:8px;height:2px;background:#9aa6ae;"></div>
<div class="a" style="left:1036px;top:1078px;width:36px;height:2px;background:#9aa6ae;"></div>
<div class="t" style="left:1346.5px;top:1053px;color:#fff;font-size:11px;line-height:13px">U:</div>
<div class="t" style="left:1346.5px;top:1066px;color:#fff;font-size:11px;line-height:13px">D:</div>
<div class="t" style="left:1386.7px;top:1053px;color:#fff;font-size:11px;line-height:13px;letter-spacing:0.287px">8.86 kbit/s</div>
<div class="t" style="left:1380.8px;top:1066px;color:#fff;font-size:11px;line-height:13px;letter-spacing:0.245px">47.44 kbit/s</div>
<svg style="left:1455px;top:1054px;" width="23" height="23" viewBox="0 0 23 23"><path d="M11.5 0.5l11 11-11 11-11-11z" fill="#f5a623"/><circle cx="11.5" cy="11.5" r="5" fill="#fff4d0"/><circle cx="11.5" cy="11.5" r="4" fill="#6b3a0a"/><rect x="8.5" y="10.7" width="6" height="1.6" fill="#f5a623"/></svg>
<div class="t" style="left:1485.7px;top:1057px;color:#fff;font-size:15px;letter-spacing:-0.100px;transform:scaleX(0.9290);transform-origin:0 0">Closed road on 26 July...</div>
<svg style="left:1655px;top:1059px;" width="13" height="8" viewBox="0 0 13 8"><path d="M1 7l5.5-5.5L12 7" fill="none" stroke="#fff" stroke-width="1.3"/></svg>
<svg style="left:1678px;top:1057px;" width="16" height="17" viewBox="0 0 16 17"><rect x="0" y="0" width="16" height="17" fill="#1a1a2a"/><path d="M5 3l5 5-5 6M9 5l3 3-3 4" fill="none" stroke="#3ab0f0" stroke-width="1.5"/></svg>
<svg style="left:1703px;top:1057px;" width="15" height="17" viewBox="0 0 15 17"><rect x="1" y="4" width="11" height="9" rx="2" fill="none" stroke="#fff" stroke-width="1.2"/><path d="M4 1h5M6.5 13v3" stroke="#fff" stroke-width="1.2"/><rect x="8" y="6" width="6" height="5" fill="#30363a" stroke="#fff" stroke-width="1"/></svg>
<svg style="left:1726px;top:1058px;" width="16" height="15" viewBox="0 0 16 15"><path d="M1 5h3l4-4v13l-4-4H1z" fill="none" stroke="#fff" stroke-width="1.2"/><path d="M10 4q2 3.5 0 7M12.5 2q3.5 5.5 0 11" fill="none" stroke="#fff" stroke-width="1.2"/></svg>
<svg style="left:1750px;top:1057px;" width="17" height="17" viewBox="0 0 17 17"><rect x="4" y="1" width="12" height="10" fill="none" stroke="#fff" stroke-width="1.3"/><path d="M1 4v12M1 13h10M6 11v3" stroke="#fff" stroke-width="1.3"/></svg>
<div class="t" style="left:1776px;top:1058px;color:#fff;font-size:12.5px;letter-spacing:-0.083px;transform:scaleX(0.8607);transform-origin:0 0">ENG</div>
<div class="t" style="left:1815px;top:1058px;color:#fff;font-size:12.5px;letter-spacing:-0.083px;transform:scaleX(0.9246);transform-origin:0 0">3:51 PM</div>
<div class="a" style="left:1915px;top:1050px;width:1px;height:30px;background:#80868a;"></div>
<svg style="left:1879px;top:1057px;" width="18" height="17" viewBox="0 0 18 17"><path d="M0.5 0.5h17v12H9l-4 4v-4H0.5z" fill="#fff"/><path d="M3 4h12M3 7h12M3 10h8" stroke="#30363a" stroke-width="1.2"/></svg>
<svg style="left:840px;top:945px" width="240" height="80" viewBox="840 945 240 80"><g opacity="0.5"><g fill="none" stroke="#c6c8cc" stroke-linecap="round" stroke-linejoin="round"><path d="M869 983.3A15.5 15.3 0 1 0 878 1008.3" stroke-width="10.5"/><path d="M884 957.5V1007" stroke-width="10"/><path d="M878 1007H1040" stroke-width="11.5" stroke-linecap="butt"/><circle cx="921.5" cy="991" r="15" stroke-width="10"/><path d="M961.5 990V1007M983.5 990V1007M999.5 986.5V1007M1016.5 983.5V1007" stroke-width="11"/><circle cx="1052.8" cy="997.5" r="16" stroke-width="11"/></g><g fill="#c6c8cc"><circle cx="913.3" cy="959.1" r="6.7"/><circle cx="930" cy="959.1" r="6.7"/><circle cx="954" cy="972.8" r="6.7"/><circle cx="970.6" cy="973.1" r="6.7"/></g></g></svg>
<svg style="left:840px;top:1015px;" width="245" height="40" viewBox="0 0 245 40"><g opacity="0.42"><text x="3" y="34.4" font-family="Liberation Sans" font-size="37" textLength="233" lengthAdjust="spacing" fill="#d6d9de" stroke="#d6d9de" stroke-width="1.3" stroke-linejoin="round">mostaql.com</text></g></svg>
</body></html>
